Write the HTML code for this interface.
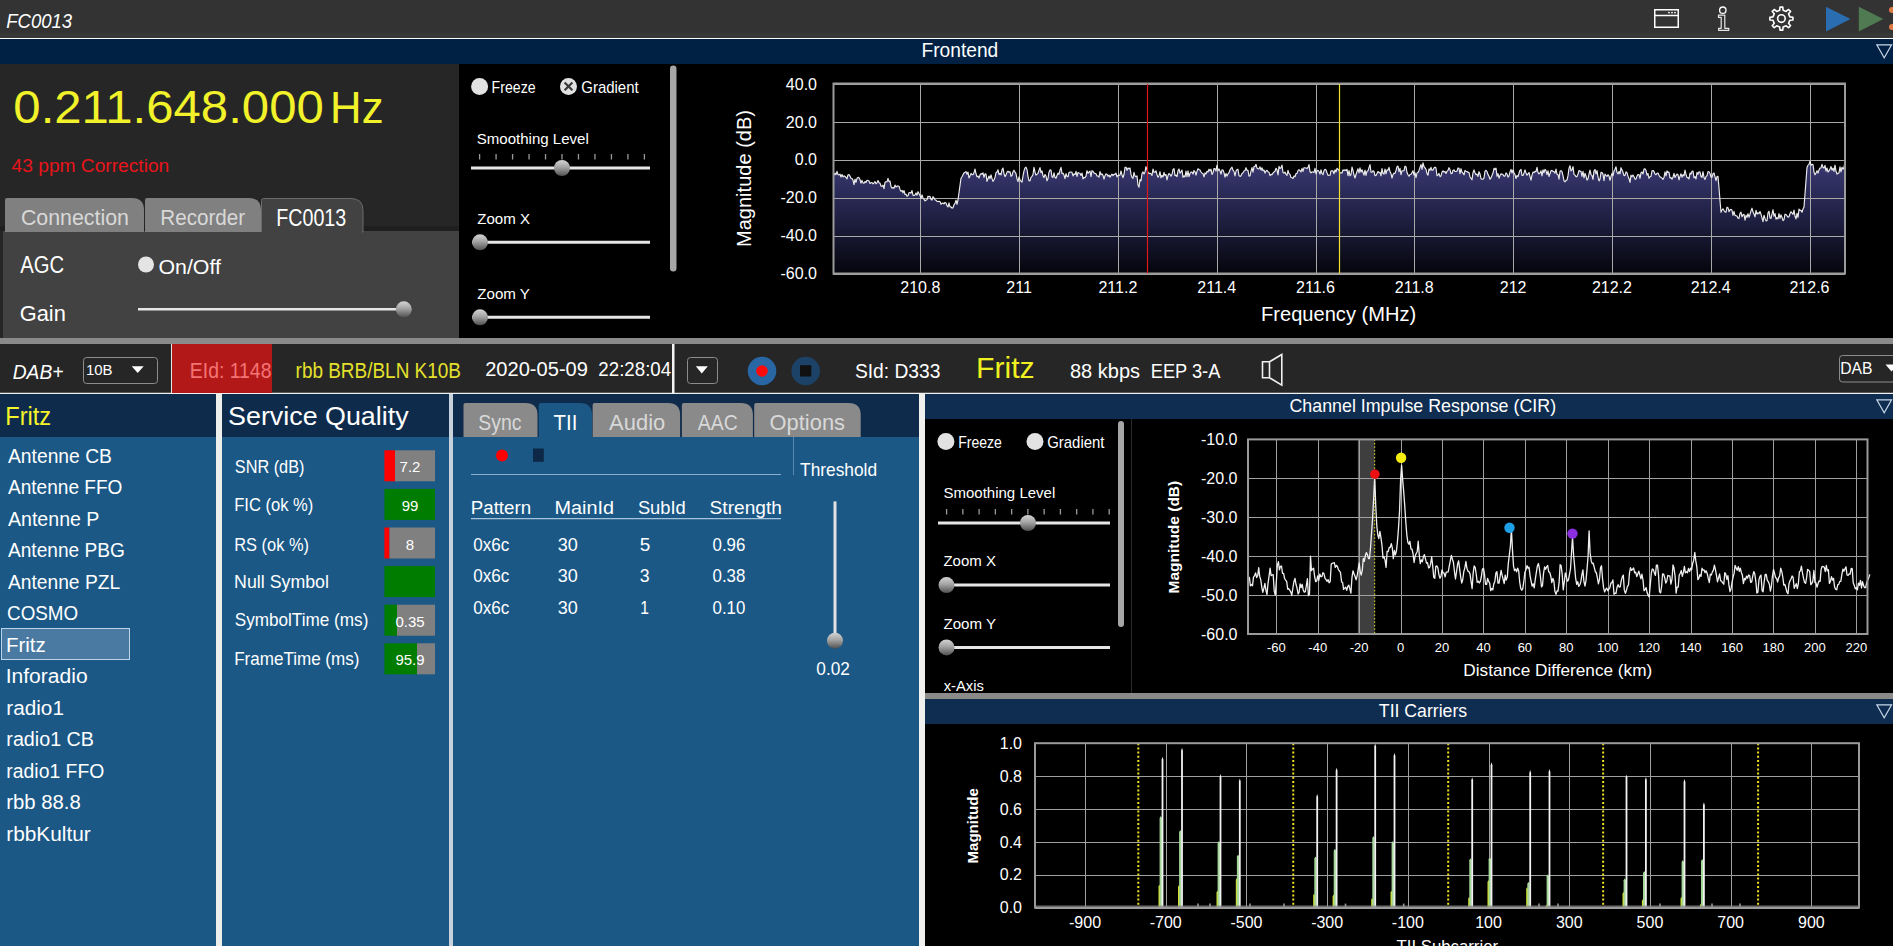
<!DOCTYPE html>
<html><head><meta charset="utf-8"><title>FC0013</title>
<style>
html,body{margin:0;padding:0;background:#000;overflow:hidden;}
svg{display:block;font-family:"Liberation Sans",sans-serif;}
</style></head><body>
<svg width="1893" height="946" viewBox="0 0 1893 946">
<defs>
<linearGradient id="thumb" x1="0" y1="0" x2="0" y2="1">
<stop offset="0" stop-color="#d4d4d4"/><stop offset="0.45" stop-color="#a4a4a4"/><stop offset="1" stop-color="#505050"/>
</linearGradient>
<linearGradient id="specfill" gradientUnits="userSpaceOnUse" x1="0" y1="160" x2="0" y2="274">
<stop offset="0" stop-color="#3a3a74"/><stop offset="0.5" stop-color="#202044"/><stop offset="1" stop-color="#05050c"/>
</linearGradient>
<linearGradient id="greenspike" x1="0" y1="0" x2="0" y2="1">
<stop offset="0" stop-color="#8fd08a"/><stop offset="1" stop-color="#d8f0d0"/>
</linearGradient>
</defs>
<rect x="0" y="0" width="1893" height="38" fill="#333333" />
<rect x="0" y="33" width="1893" height="5" fill="#383838" />
<line x1="0" y1="38.5" x2="1893" y2="38.5" stroke="#ffffff" stroke-width="1" />
<text x="6.24" y="28" font-size="20.3" fill="#ffffff" textLength="65.9" lengthAdjust="spacingAndGlyphs" font-style="italic" >FC0013</text>
<rect x="1654.75" y="9.75" width="23.5" height="17.5" fill="none" stroke="#fff" stroke-width="1.5"/>
<line x1="1655" y1="15.5" x2="1678" y2="15.5" stroke="#fff" stroke-width="1.5" />
<circle cx="1669" cy="12.6" r="0.9" fill="#fff" />
<circle cx="1672" cy="12.6" r="0.9" fill="#fff" />
<circle cx="1675" cy="12.6" r="0.9" fill="#fff" />
<circle cx="1722.8" cy="10.2" r="3.2" fill="none" stroke="#fff" stroke-width="1.3"/>
<path d="M1718.5 15.2 H1724.8 V28.3 H1728.8 V30.3 H1718.6 V28.3 H1721.2 V17.4 H1718.5 Z" fill="none" stroke="#e8e8e8" stroke-width="1.2" stroke-linejoin="round"/>
<path d="M1789.83 16.89 L1792.92 17.21 L1792.92 19.99 L1789.83 20.31 L1788.57 23.35 L1790.53 25.76 L1788.56 27.73 L1786.15 25.77 L1783.11 27.03 L1782.79 30.12 L1780.01 30.12 L1779.69 27.03 L1776.65 25.77 L1774.24 27.73 L1772.27 25.76 L1774.23 23.35 L1772.97 20.31 L1769.88 19.99 L1769.88 17.21 L1772.97 16.89 L1774.23 13.85 L1772.27 11.44 L1774.24 9.47 L1776.65 11.43 L1779.69 10.17 L1780.01 7.08 L1782.79 7.08 L1783.11 10.17 L1786.15 11.43 L1788.56 9.47 L1790.53 11.44 L1788.57 13.85Z" fill="none" stroke="#fff" stroke-width="1.6" stroke-linejoin="round"/>
<circle cx="1781.4" cy="18.6" r="3.8" fill="none" stroke="#fff" stroke-width="1.6"/>
<path d="M1826 6.8 L1850.5 18.9 L1826 31.4 Z" fill="#2a6db0"/>
<path d="M1858.8 6.8 L1883.3 18.9 L1858.8 31.4 Z" fill="#4f7a52"/>
<circle cx="1892" cy="10" r="3" fill="#e07a45" />
<circle cx="1892" cy="27" r="3" fill="#e07a45" />
<rect x="0" y="39" width="1893" height="25" fill="#002143" />
<text x="921.46" y="57" font-size="19.3" fill="#ffffff" textLength="76.83" lengthAdjust="spacingAndGlyphs" >Frontend</text>
<path d="M1876.8 44.8 H1891.6 L1884.2 57.8 Z" fill="none" stroke="#c8d8ea" stroke-width="1.15"/>
<rect x="0" y="64" width="459" height="274" fill="#262626" />
<text x="13.34" y="122.9" font-size="45.3" fill="#f2f22a" textLength="310.43" lengthAdjust="spacingAndGlyphs" >0.211.648.000</text>
<text x="330.11" y="122.9" font-size="45" fill="#f2f22a" textLength="53.37" lengthAdjust="spacingAndGlyphs" >Hz</text>
<text x="11.62" y="172" font-size="19.2" fill="#e8141a" textLength="157.65" lengthAdjust="spacingAndGlyphs" >43 ppm Correction</text>
<rect x="3" y="231" width="456" height="107" fill="#424242" />
<rect x="0" y="226" width="459" height="5" fill="#1f1f1f" />
<path d="M5 232 V200 Q5 198 7 198 H132 Q144 198 144 210 V232 Z" fill="#808080"/>
<path d="M145 232 V200 Q145 198 147 198 H249 Q261 198 261 210 V232 Z" fill="#808080"/>
<path d="M261.5 232 V200.5 Q261.5 198.5 263.5 198.5 H351 Q363 198.5 363 210.5 V232 Z" fill="#424242" stroke="#6a6a6a" stroke-width="1"/>
<rect x="262" y="231" width="100" height="3" fill="#424242" />
<text x="20.93" y="225.3" font-size="22" fill="#d8d8d8" textLength="108.04" lengthAdjust="spacingAndGlyphs" >Connection</text>
<text x="160.35" y="225.4" font-size="22" fill="#d8d8d8" textLength="84.82" lengthAdjust="spacingAndGlyphs" >Recorder</text>
<text x="276.23" y="225.5" font-size="23" fill="#ffffff" textLength="70.02" lengthAdjust="spacingAndGlyphs" >FC0013</text>
<text x="20.3" y="272.9" font-size="23" fill="#ffffff" textLength="43.95" lengthAdjust="spacingAndGlyphs" >AGC</text>
<circle cx="146" cy="264.5" r="8" fill="#e4e4e4" />
<text x="158.44" y="273.7" font-size="21" fill="#ffffff" textLength="62.5" lengthAdjust="spacingAndGlyphs" >On/Off</text>
<text x="19.71" y="320.9" font-size="22.2" fill="#ffffff" textLength="46.16" lengthAdjust="spacingAndGlyphs" >Gain</text>
<line x1="138" y1="309.3" x2="398" y2="309.3" stroke="#e6e6e6" stroke-width="2.5" />
<circle cx="403.8" cy="309.3" r="8" fill="url(#thumb)" />
<rect x="459" y="64" width="221" height="274" fill="#000000" />
<circle cx="479.6" cy="86.4" r="8.5" fill="#e2e2e2" />
<text x="491.57" y="92.8" font-size="15.7" fill="#ffffff" textLength="44.03" lengthAdjust="spacingAndGlyphs" >Freeze</text>
<circle cx="568.5" cy="86.4" r="8.5" fill="#e2e2e2" />
<path d="M564.6 82.5 L572.4 90.3 M572.4 82.5 L564.6 90.3" stroke="#3a3a3a" stroke-width="2.2"/>
<text x="581.25" y="92.8" font-size="15.7" fill="#ffffff" textLength="57.43" lengthAdjust="spacingAndGlyphs" >Gradient</text>
<rect x="670" y="65.5" width="6.5" height="206" rx="3.2" fill="#a6a6a6"/>
<text x="476.72" y="143.7" font-size="15.1" fill="#ffffff" textLength="112.02" lengthAdjust="spacingAndGlyphs" >Smoothing Level</text>
<line x1="479.6" y1="154" x2="479.6" y2="159.5" stroke="#9a9a9a" stroke-width="1.3" />
<line x1="496.08000000000004" y1="154" x2="496.08000000000004" y2="159.5" stroke="#9a9a9a" stroke-width="1.3" />
<line x1="512.5600000000001" y1="154" x2="512.5600000000001" y2="159.5" stroke="#9a9a9a" stroke-width="1.3" />
<line x1="529.04" y1="154" x2="529.04" y2="159.5" stroke="#9a9a9a" stroke-width="1.3" />
<line x1="545.52" y1="154" x2="545.52" y2="159.5" stroke="#9a9a9a" stroke-width="1.3" />
<line x1="562.0" y1="154" x2="562.0" y2="159.5" stroke="#9a9a9a" stroke-width="1.3" />
<line x1="578.48" y1="154" x2="578.48" y2="159.5" stroke="#9a9a9a" stroke-width="1.3" />
<line x1="594.96" y1="154" x2="594.96" y2="159.5" stroke="#9a9a9a" stroke-width="1.3" />
<line x1="611.44" y1="154" x2="611.44" y2="159.5" stroke="#9a9a9a" stroke-width="1.3" />
<line x1="627.9200000000001" y1="154" x2="627.9200000000001" y2="159.5" stroke="#9a9a9a" stroke-width="1.3" />
<line x1="644.4000000000001" y1="154" x2="644.4000000000001" y2="159.5" stroke="#9a9a9a" stroke-width="1.3" />
<line x1="471" y1="168" x2="650" y2="168" stroke="#e6e6e6" stroke-width="3" />
<circle cx="562" cy="168" r="8" fill="url(#thumb)" />
<text x="477.25" y="223.6" font-size="14.9" fill="#ffffff" textLength="52.67" lengthAdjust="spacingAndGlyphs" >Zoom X</text>
<line x1="472" y1="242.3" x2="650" y2="242.3" stroke="#e6e6e6" stroke-width="3" />
<circle cx="480" cy="242.3" r="8" fill="url(#thumb)" />
<text x="477.25" y="299" font-size="14.9" fill="#ffffff" textLength="52.7" lengthAdjust="spacingAndGlyphs" >Zoom Y</text>
<line x1="472" y1="317.3" x2="650" y2="317.3" stroke="#e6e6e6" stroke-width="3" />
<circle cx="480" cy="317.3" r="8" fill="url(#thumb)" />
<rect x="680" y="64" width="1213" height="274" fill="#000000" />
<polygon points="834,273.5 834,175.2 835,173.2 836,174.6 837,171.3 838,174.7 839,174.9 840,174.1 841,177.0 842,174.5 843,176.9 844,175.8 845,176.4 846,177.5 847,178.9 848,174.7 849,174.6 850,176.1 851,178.3 852,178.5 853,180.1 854,184.6 855,179.1 856,182.3 857,178.4 858,177.4 859,177.7 860,179.5 861,183.1 862,180.4 863,182.9 864,183.2 865,181.5 866,182.6 867,180.3 868,180.5 869,181.0 870,183.5 871,182.7 872,182.5 873,183.9 874,182.8 875,181.6 876,183.8 877,182.9 878,180.5 879,182.7 880,183.1 881,186.0 882,186.5 883,185.2 884,188.6 885,182.3 886,181.7 887,181.8 888,178.3 889,181.6 890,181.1 891,186.5 892,188.2 893,187.4 894,188.4 895,185.1 896,187.0 897,186.1 898,186.0 899,186.2 900,189.4 901,191.3 902,190.3 903,192.9 904,190.5 905,194.5 906,194.3 907,196.3 908,195.7 909,192.8 910,192.5 911,193.1 912,190.5 913,195.3 914,195.6 915,195.1 916,192.9 917,195.2 918,191.7 919,193.6 920,195.4 921,198.5 922,194.9 923,198.0 924,199.3 925,200.9 926,200.0 927,199.7 928,196.2 929,196.8 930,196.4 931,199.2 932,200.1 933,196.7 934,198.1 935,199.7 936,200.3 937,201.2 938,201.7 939,201.2 940,201.5 941,204.3 942,203.4 943,203.0 944,203.9 945,202.4 946,203.0 947,205.7 948,207.0 949,202.9 950,206.9 951,206.9 952,208.2 953,207.8 954,204.8 955,203.4 956,200.2 957,204.4 958,200.0 959,192.6 960,185.4 961,178.2 962,176.7 963,174.7 964,172.9 965,172.3 966,171.6 967,174.2 968,172.1 969,177.9 970,175.9 971,173.4 972,174.7 973,174.6 974,172.8 975,169.0 976,173.8 977,176.8 978,176.1 979,178.1 980,174.8 981,173.6 982,174.2 983,172.8 984,177.3 985,173.9 986,174.1 987,181.4 988,178.7 989,176.0 990,178.7 991,174.9 992,178.6 993,181.4 994,179.7 995,177.4 996,172.8 997,172.0 998,169.8 999,174.6 1000,173.4 1001,174.9 1002,169.9 1003,168.1 1004,173.7 1005,176.6 1006,174.9 1007,172.2 1008,171.2 1009,172.3 1010,171.7 1011,176.3 1012,175.5 1013,171.7 1014,170.2 1015,172.1 1016,173.6 1017,178.9 1018,181.6 1019,176.9 1020,179.8 1021,181.3 1022,182.1 1023,175.9 1024,170.9 1025,167.9 1026,167.2 1027,169.6 1028,176.3 1029,180.8 1030,180.9 1031,177.3 1032,176.3 1033,174.5 1034,167.4 1035,172.1 1036,175.1 1037,174.3 1038,173.3 1039,170.4 1040,167.6 1041,172.6 1042,170.9 1043,175.8 1044,177.7 1045,174.5 1046,176.0 1047,180.8 1048,178.5 1049,172.2 1050,169.9 1051,170.0 1052,177.0 1053,177.4 1054,172.9 1055,177.6 1056,178.2 1057,175.5 1058,173.1 1059,174.3 1060,170.1 1061,167.4 1062,173.7 1063,173.2 1064,175.1 1065,178.7 1066,173.6 1067,176.4 1068,176.8 1069,172.5 1070,172.0 1071,172.0 1072,172.4 1073,175.9 1074,173.9 1075,174.5 1076,171.3 1077,176.5 1078,172.5 1079,173.0 1080,173.2 1081,175.5 1082,173.1 1083,178.8 1084,177.4 1085,177.7 1086,176.1 1087,170.7 1088,173.3 1089,172.0 1090,171.2 1091,176.6 1092,170.7 1093,171.3 1094,172.9 1095,173.4 1096,173.7 1097,175.9 1098,176.0 1099,177.2 1100,171.5 1101,174.8 1102,173.8 1103,175.4 1104,179.2 1105,175.7 1106,173.9 1107,174.2 1108,176.3 1109,175.0 1110,177.2 1111,175.4 1112,174.1 1113,175.6 1114,174.3 1115,174.3 1116,173.1 1117,176.9 1118,175.3 1119,175.4 1120,174.9 1121,171.0 1122,175.0 1123,177.6 1124,174.5 1125,167.4 1126,167.2 1127,170.4 1128,168.0 1129,168.9 1130,168.0 1131,174.4 1132,177.3 1133,178.5 1134,172.3 1135,176.1 1136,176.7 1137,175.9 1138,185.1 1139,187.2 1140,179.5 1141,180.9 1142,173.5 1143,171.9 1144,174.0 1145,171.9 1146,166.7 1147,169.6 1148,172.5 1149,173.5 1150,173.4 1151,173.8 1152,175.5 1153,169.0 1154,172.3 1155,172.2 1156,170.8 1157,174.7 1158,177.2 1159,175.7 1160,171.7 1161,177.8 1162,175.4 1163,176.9 1164,172.4 1165,175.5 1166,174.5 1167,179.8 1168,175.6 1169,173.6 1170,174.2 1171,176.2 1172,174.3 1173,169.5 1174,168.7 1175,175.7 1176,175.1 1177,176.6 1178,170.8 1179,168.9 1180,173.1 1181,171.8 1182,170.0 1183,177.3 1184,175.8 1185,177.0 1186,171.1 1187,176.6 1188,170.9 1189,176.7 1190,173.5 1191,172.0 1192,172.1 1193,174.1 1194,170.5 1195,171.7 1196,175.2 1197,171.4 1198,168.8 1199,169.5 1200,170.0 1201,172.0 1202,173.2 1203,173.5 1204,176.8 1205,172.8 1206,174.0 1207,171.3 1208,172.0 1209,169.2 1210,170.9 1211,169.2 1212,174.5 1213,172.8 1214,168.5 1215,168.6 1216,171.1 1217,165.0 1218,170.7 1219,169.0 1220,171.1 1221,174.1 1222,169.9 1223,170.0 1224,172.6 1225,177.2 1226,173.5 1227,176.1 1228,173.9 1229,172.7 1230,169.8 1231,168.4 1232,167.1 1233,170.2 1234,171.5 1235,176.0 1236,171.0 1237,169.6 1238,169.3 1239,175.6 1240,176.4 1241,175.8 1242,173.6 1243,172.7 1244,171.1 1245,170.6 1246,167.7 1247,170.4 1248,170.3 1249,176.1 1250,175.8 1251,171.2 1252,167.6 1253,172.1 1254,166.6 1255,166.5 1256,164.3 1257,168.1 1258,168.9 1259,168.7 1260,166.8 1261,170.2 1262,167.8 1263,170.7 1264,170.0 1265,173.1 1266,171.0 1267,170.3 1268,171.8 1269,172.2 1270,175.6 1271,174.4 1272,174.6 1273,173.1 1274,171.9 1275,171.3 1276,168.3 1277,169.9 1278,174.9 1279,166.4 1280,168.4 1281,167.8 1282,165.1 1283,172.4 1284,173.2 1285,172.1 1286,174.3 1287,175.4 1288,170.3 1289,173.6 1290,174.4 1291,177.5 1292,177.8 1293,178.4 1294,176.1 1295,176.7 1296,173.6 1297,173.4 1298,170.6 1299,169.6 1300,170.6 1301,172.0 1302,168.4 1303,171.4 1304,167.7 1305,167.8 1306,168.0 1307,168.6 1308,167.4 1309,164.6 1310,171.7 1311,172.9 1312,171.9 1313,172.0 1314,172.5 1315,168.3 1316,173.9 1317,171.1 1318,170.3 1319,171.5 1320,174.1 1321,169.8 1322,173.5 1323,174.7 1324,170.6 1325,169.3 1326,169.9 1327,172.8 1328,175.4 1329,175.2 1330,175.3 1331,170.8 1332,170.9 1333,171.0 1334,173.7 1335,169.8 1336,172.0 1337,168.4 1338,169.1 1339,170.5 1340,173.0 1341,172.9 1342,173.0 1343,169.9 1344,170.5 1345,169.8 1346,170.6 1347,169.3 1348,175.6 1349,170.5 1350,175.8 1351,174.7 1352,167.0 1353,170.5 1354,175.0 1355,178.0 1356,174.5 1357,171.5 1358,168.8 1359,172.8 1360,167.8 1361,172.1 1362,169.8 1363,172.3 1364,175.1 1365,170.0 1366,175.4 1367,171.2 1368,170.9 1369,167.7 1370,164.6 1371,172.1 1372,172.2 1373,170.7 1374,171.5 1375,175.7 1376,175.4 1377,173.4 1378,171.4 1379,172.7 1380,172.4 1381,175.8 1382,168.6 1383,173.3 1384,174.1 1385,169.0 1386,173.8 1387,169.9 1388,170.2 1389,167.4 1390,171.4 1391,173.7 1392,178.0 1393,174.6 1394,173.2 1395,173.4 1396,170.5 1397,166.7 1398,166.1 1399,171.6 1400,168.3 1401,174.6 1402,170.9 1403,170.8 1404,170.6 1405,166.2 1406,166.8 1407,172.5 1408,174.8 1409,176.3 1410,174.5 1411,174.2 1412,172.6 1413,170.7 1414,175.1 1415,172.7 1416,177.6 1417,173.0 1418,172.5 1419,170.4 1420,167.4 1421,164.5 1422,169.3 1423,162.8 1424,166.6 1425,167.9 1426,169.4 1427,173.6 1428,175.2 1429,168.9 1430,170.3 1431,167.4 1432,170.3 1433,170.1 1434,168.0 1435,167.1 1436,168.0 1437,175.7 1438,175.1 1439,173.4 1440,176.7 1441,175.9 1442,172.1 1443,170.9 1444,172.0 1445,171.4 1446,173.5 1447,171.3 1448,170.3 1449,167.7 1450,169.6 1451,173.7 1452,173.5 1453,170.2 1454,169.9 1455,171.5 1456,171.4 1457,171.2 1458,168.0 1459,168.3 1460,173.6 1461,168.7 1462,172.2 1463,173.1 1464,174.8 1465,170.4 1466,171.4 1467,171.5 1468,172.4 1469,172.4 1470,177.0 1471,178.3 1472,179.8 1473,172.5 1474,169.9 1475,172.8 1476,174.7 1477,174.1 1478,176.5 1479,171.7 1480,173.9 1481,178.7 1482,179.3 1483,179.1 1484,178.0 1485,171.1 1486,170.3 1487,171.5 1488,174.6 1489,176.3 1490,179.2 1491,177.9 1492,175.5 1493,173.0 1494,168.4 1495,169.5 1496,168.1 1497,176.3 1498,173.6 1499,178.2 1500,175.5 1501,173.9 1502,174.1 1503,174.7 1504,176.1 1505,176.1 1506,172.9 1507,173.9 1508,177.2 1509,175.9 1510,171.9 1511,169.4 1512,173.0 1513,169.8 1514,172.8 1515,174.7 1516,178.5 1517,175.5 1518,176.7 1519,173.3 1520,170.3 1521,169.3 1522,175.5 1523,175.5 1524,173.1 1525,169.9 1526,172.9 1527,175.2 1528,173.8 1529,172.5 1530,176.6 1531,180.1 1532,175.1 1533,172.1 1534,172.6 1535,171.4 1536,171.6 1537,167.3 1538,172.7 1539,173.8 1540,173.0 1541,170.8 1542,175.8 1543,169.8 1544,172.7 1545,169.3 1546,170.6 1547,174.6 1548,170.9 1549,176.5 1550,173.6 1551,170.8 1552,170.4 1553,171.2 1554,171.8 1555,173.2 1556,169.1 1557,174.3 1558,174.6 1559,179.2 1560,171.5 1561,170.6 1562,171.6 1563,175.6 1564,180.9 1565,181.8 1566,180.4 1567,180.0 1568,175.7 1569,168.1 1570,165.7 1571,170.9 1572,169.9 1573,166.6 1574,174.4 1575,175.1 1576,176.6 1577,176.6 1578,174.0 1579,170.5 1580,171.1 1581,171.4 1582,176.5 1583,171.3 1584,178.0 1585,173.3 1586,175.9 1587,180.1 1588,178.9 1589,174.0 1590,170.1 1591,174.5 1592,175.7 1593,179.4 1594,170.9 1595,169.5 1596,173.9 1597,170.6 1598,176.8 1599,180.9 1600,179.1 1601,172.3 1602,172.6 1603,174.1 1604,180.7 1605,174.0 1606,175.3 1607,176.4 1608,174.7 1609,176.0 1610,180.4 1611,176.5 1612,173.3 1613,175.8 1614,171.1 1615,169.3 1616,166.8 1617,172.5 1618,173.9 1619,171.6 1620,173.8 1621,167.7 1622,170.1 1623,172.3 1624,175.7 1625,175.4 1626,171.9 1627,172.7 1628,176.2 1629,178.7 1630,182.4 1631,175.2 1632,176.8 1633,174.9 1634,176.8 1635,179.1 1636,179.1 1637,176.1 1638,174.5 1639,174.6 1640,178.3 1641,172.8 1642,172.0 1643,173.9 1644,169.1 1645,168.8 1646,170.3 1647,175.1 1648,173.6 1649,178.3 1650,176.8 1651,176.3 1652,170.7 1653,170.5 1654,171.5 1655,174.0 1656,174.7 1657,173.3 1658,173.0 1659,175.3 1660,176.9 1661,177.3 1662,178.1 1663,179.3 1664,177.4 1665,171.9 1666,175.8 1667,170.9 1668,172.5 1669,172.1 1670,177.9 1671,177.6 1672,179.2 1673,177.0 1674,173.3 1675,177.6 1676,175.6 1677,174.0 1678,174.8 1679,179.9 1680,176.4 1681,173.8 1682,177.2 1683,174.6 1684,175.8 1685,170.0 1686,174.5 1687,177.6 1688,177.6 1689,178.8 1690,173.0 1691,174.1 1692,171.2 1693,171.0 1694,177.8 1695,176.6 1696,178.9 1697,172.4 1698,174.3 1699,171.8 1700,172.1 1701,176.5 1702,177.4 1703,171.7 1704,177.4 1705,179.5 1706,176.6 1707,175.6 1708,171.6 1709,171.7 1710,173.5 1711,177.0 1712,177.3 1713,173.7 1714,173.0 1715,176.9 1716,180.7 1717,176.6 1718,176.4 1719,188.0 1720,200.6 1721,212.3 1722,210.0 1723,208.8 1724,210.5 1725,211.9 1726,212.1 1727,207.2 1728,207.7 1729,211.7 1730,209.7 1731,209.4 1732,210.3 1733,215.3 1734,211.4 1735,215.4 1736,215.7 1737,216.1 1738,218.3 1739,218.4 1740,213.4 1741,212.1 1742,216.8 1743,214.7 1744,214.3 1745,220.2 1746,215.3 1747,217.3 1748,213.7 1749,217.2 1750,214.2 1751,210.9 1752,208.2 1753,212.1 1754,214.1 1755,216.9 1756,210.4 1757,214.2 1758,212.7 1759,213.7 1760,211.5 1761,214.3 1762,217.9 1763,221.6 1764,215.3 1765,218.4 1766,220.9 1767,220.8 1768,212.7 1769,211.2 1770,217.9 1771,218.4 1772,213.8 1773,209.7 1774,216.3 1775,213.6 1776,219.1 1777,217.7 1778,218.8 1779,213.7 1780,218.4 1781,214.9 1782,217.3 1783,220.7 1784,219.6 1785,214.2 1786,214.5 1787,215.9 1788,217.2 1789,216.7 1790,213.7 1791,211.7 1792,213.0 1793,214.3 1794,210.1 1795,216.3 1796,218.9 1797,213.3 1798,217.4 1799,209.1 1800,210.4 1801,210.4 1802,212.2 1803,209.1 1804,207.1 1805,193.9 1806,180.5 1807,167.5 1808,165.1 1809,164.4 1810,161.2 1811,165.3 1812,164.3 1813,164.5 1814,172.1 1815,174.8 1816,173.1 1817,170.8 1818,173.1 1819,169.9 1820,168.1 1821,167.9 1822,164.4 1823,167.2 1824,168.1 1825,165.4 1826,171.1 1827,168.0 1828,172.0 1829,170.9 1830,168.9 1831,166.6 1832,170.2 1833,168.2 1834,171.4 1835,165.2 1836,171.3 1837,174.1 1838,173.2 1839,172.9 1840,166.8 1841,171.8 1842,167.3 1843,169.1 1844,167.4 1845,161.3 1845,273.5" fill="url(#specfill)"/>
<line x1="833" y1="84.5" x2="1845" y2="84.5" stroke="#a8a8a8" stroke-width="1" />
<line x1="833" y1="122.5" x2="1845" y2="122.5" stroke="#a8a8a8" stroke-width="1" />
<line x1="833" y1="160.5" x2="1845" y2="160.5" stroke="#a8a8a8" stroke-width="1" />
<line x1="833" y1="198.5" x2="1845" y2="198.5" stroke="#a8a8a8" stroke-width="1" />
<line x1="833" y1="236.5" x2="1845" y2="236.5" stroke="#a8a8a8" stroke-width="1" />
<line x1="833" y1="274.5" x2="1845" y2="274.5" stroke="#a8a8a8" stroke-width="1" />
<line x1="920.5" y1="84" x2="920.5" y2="273.5" stroke="#a8a8a8" stroke-width="1" />
<line x1="1019.5" y1="84" x2="1019.5" y2="273.5" stroke="#a8a8a8" stroke-width="1" />
<line x1="1118.5" y1="84" x2="1118.5" y2="273.5" stroke="#a8a8a8" stroke-width="1" />
<line x1="1217.5" y1="84" x2="1217.5" y2="273.5" stroke="#a8a8a8" stroke-width="1" />
<line x1="1316.5" y1="84" x2="1316.5" y2="273.5" stroke="#a8a8a8" stroke-width="1" />
<line x1="1414.5" y1="84" x2="1414.5" y2="273.5" stroke="#a8a8a8" stroke-width="1" />
<line x1="1513.5" y1="84" x2="1513.5" y2="273.5" stroke="#a8a8a8" stroke-width="1" />
<line x1="1612.5" y1="84" x2="1612.5" y2="273.5" stroke="#a8a8a8" stroke-width="1" />
<line x1="1711.5" y1="84" x2="1711.5" y2="273.5" stroke="#a8a8a8" stroke-width="1" />
<line x1="1810.5" y1="84" x2="1810.5" y2="273.5" stroke="#a8a8a8" stroke-width="1" />
<polyline points="834,175.2 835,173.2 836,174.6 837,171.3 838,174.7 839,174.9 840,174.1 841,177.0 842,174.5 843,176.9 844,175.8 845,176.4 846,177.5 847,178.9 848,174.7 849,174.6 850,176.1 851,178.3 852,178.5 853,180.1 854,184.6 855,179.1 856,182.3 857,178.4 858,177.4 859,177.7 860,179.5 861,183.1 862,180.4 863,182.9 864,183.2 865,181.5 866,182.6 867,180.3 868,180.5 869,181.0 870,183.5 871,182.7 872,182.5 873,183.9 874,182.8 875,181.6 876,183.8 877,182.9 878,180.5 879,182.7 880,183.1 881,186.0 882,186.5 883,185.2 884,188.6 885,182.3 886,181.7 887,181.8 888,178.3 889,181.6 890,181.1 891,186.5 892,188.2 893,187.4 894,188.4 895,185.1 896,187.0 897,186.1 898,186.0 899,186.2 900,189.4 901,191.3 902,190.3 903,192.9 904,190.5 905,194.5 906,194.3 907,196.3 908,195.7 909,192.8 910,192.5 911,193.1 912,190.5 913,195.3 914,195.6 915,195.1 916,192.9 917,195.2 918,191.7 919,193.6 920,195.4 921,198.5 922,194.9 923,198.0 924,199.3 925,200.9 926,200.0 927,199.7 928,196.2 929,196.8 930,196.4 931,199.2 932,200.1 933,196.7 934,198.1 935,199.7 936,200.3 937,201.2 938,201.7 939,201.2 940,201.5 941,204.3 942,203.4 943,203.0 944,203.9 945,202.4 946,203.0 947,205.7 948,207.0 949,202.9 950,206.9 951,206.9 952,208.2 953,207.8 954,204.8 955,203.4 956,200.2 957,204.4 958,200.0 959,192.6 960,185.4 961,178.2 962,176.7 963,174.7 964,172.9 965,172.3 966,171.6 967,174.2 968,172.1 969,177.9 970,175.9 971,173.4 972,174.7 973,174.6 974,172.8 975,169.0 976,173.8 977,176.8 978,176.1 979,178.1 980,174.8 981,173.6 982,174.2 983,172.8 984,177.3 985,173.9 986,174.1 987,181.4 988,178.7 989,176.0 990,178.7 991,174.9 992,178.6 993,181.4 994,179.7 995,177.4 996,172.8 997,172.0 998,169.8 999,174.6 1000,173.4 1001,174.9 1002,169.9 1003,168.1 1004,173.7 1005,176.6 1006,174.9 1007,172.2 1008,171.2 1009,172.3 1010,171.7 1011,176.3 1012,175.5 1013,171.7 1014,170.2 1015,172.1 1016,173.6 1017,178.9 1018,181.6 1019,176.9 1020,179.8 1021,181.3 1022,182.1 1023,175.9 1024,170.9 1025,167.9 1026,167.2 1027,169.6 1028,176.3 1029,180.8 1030,180.9 1031,177.3 1032,176.3 1033,174.5 1034,167.4 1035,172.1 1036,175.1 1037,174.3 1038,173.3 1039,170.4 1040,167.6 1041,172.6 1042,170.9 1043,175.8 1044,177.7 1045,174.5 1046,176.0 1047,180.8 1048,178.5 1049,172.2 1050,169.9 1051,170.0 1052,177.0 1053,177.4 1054,172.9 1055,177.6 1056,178.2 1057,175.5 1058,173.1 1059,174.3 1060,170.1 1061,167.4 1062,173.7 1063,173.2 1064,175.1 1065,178.7 1066,173.6 1067,176.4 1068,176.8 1069,172.5 1070,172.0 1071,172.0 1072,172.4 1073,175.9 1074,173.9 1075,174.5 1076,171.3 1077,176.5 1078,172.5 1079,173.0 1080,173.2 1081,175.5 1082,173.1 1083,178.8 1084,177.4 1085,177.7 1086,176.1 1087,170.7 1088,173.3 1089,172.0 1090,171.2 1091,176.6 1092,170.7 1093,171.3 1094,172.9 1095,173.4 1096,173.7 1097,175.9 1098,176.0 1099,177.2 1100,171.5 1101,174.8 1102,173.8 1103,175.4 1104,179.2 1105,175.7 1106,173.9 1107,174.2 1108,176.3 1109,175.0 1110,177.2 1111,175.4 1112,174.1 1113,175.6 1114,174.3 1115,174.3 1116,173.1 1117,176.9 1118,175.3 1119,175.4 1120,174.9 1121,171.0 1122,175.0 1123,177.6 1124,174.5 1125,167.4 1126,167.2 1127,170.4 1128,168.0 1129,168.9 1130,168.0 1131,174.4 1132,177.3 1133,178.5 1134,172.3 1135,176.1 1136,176.7 1137,175.9 1138,185.1 1139,187.2 1140,179.5 1141,180.9 1142,173.5 1143,171.9 1144,174.0 1145,171.9 1146,166.7 1147,169.6 1148,172.5 1149,173.5 1150,173.4 1151,173.8 1152,175.5 1153,169.0 1154,172.3 1155,172.2 1156,170.8 1157,174.7 1158,177.2 1159,175.7 1160,171.7 1161,177.8 1162,175.4 1163,176.9 1164,172.4 1165,175.5 1166,174.5 1167,179.8 1168,175.6 1169,173.6 1170,174.2 1171,176.2 1172,174.3 1173,169.5 1174,168.7 1175,175.7 1176,175.1 1177,176.6 1178,170.8 1179,168.9 1180,173.1 1181,171.8 1182,170.0 1183,177.3 1184,175.8 1185,177.0 1186,171.1 1187,176.6 1188,170.9 1189,176.7 1190,173.5 1191,172.0 1192,172.1 1193,174.1 1194,170.5 1195,171.7 1196,175.2 1197,171.4 1198,168.8 1199,169.5 1200,170.0 1201,172.0 1202,173.2 1203,173.5 1204,176.8 1205,172.8 1206,174.0 1207,171.3 1208,172.0 1209,169.2 1210,170.9 1211,169.2 1212,174.5 1213,172.8 1214,168.5 1215,168.6 1216,171.1 1217,165.0 1218,170.7 1219,169.0 1220,171.1 1221,174.1 1222,169.9 1223,170.0 1224,172.6 1225,177.2 1226,173.5 1227,176.1 1228,173.9 1229,172.7 1230,169.8 1231,168.4 1232,167.1 1233,170.2 1234,171.5 1235,176.0 1236,171.0 1237,169.6 1238,169.3 1239,175.6 1240,176.4 1241,175.8 1242,173.6 1243,172.7 1244,171.1 1245,170.6 1246,167.7 1247,170.4 1248,170.3 1249,176.1 1250,175.8 1251,171.2 1252,167.6 1253,172.1 1254,166.6 1255,166.5 1256,164.3 1257,168.1 1258,168.9 1259,168.7 1260,166.8 1261,170.2 1262,167.8 1263,170.7 1264,170.0 1265,173.1 1266,171.0 1267,170.3 1268,171.8 1269,172.2 1270,175.6 1271,174.4 1272,174.6 1273,173.1 1274,171.9 1275,171.3 1276,168.3 1277,169.9 1278,174.9 1279,166.4 1280,168.4 1281,167.8 1282,165.1 1283,172.4 1284,173.2 1285,172.1 1286,174.3 1287,175.4 1288,170.3 1289,173.6 1290,174.4 1291,177.5 1292,177.8 1293,178.4 1294,176.1 1295,176.7 1296,173.6 1297,173.4 1298,170.6 1299,169.6 1300,170.6 1301,172.0 1302,168.4 1303,171.4 1304,167.7 1305,167.8 1306,168.0 1307,168.6 1308,167.4 1309,164.6 1310,171.7 1311,172.9 1312,171.9 1313,172.0 1314,172.5 1315,168.3 1316,173.9 1317,171.1 1318,170.3 1319,171.5 1320,174.1 1321,169.8 1322,173.5 1323,174.7 1324,170.6 1325,169.3 1326,169.9 1327,172.8 1328,175.4 1329,175.2 1330,175.3 1331,170.8 1332,170.9 1333,171.0 1334,173.7 1335,169.8 1336,172.0 1337,168.4 1338,169.1 1339,170.5 1340,173.0 1341,172.9 1342,173.0 1343,169.9 1344,170.5 1345,169.8 1346,170.6 1347,169.3 1348,175.6 1349,170.5 1350,175.8 1351,174.7 1352,167.0 1353,170.5 1354,175.0 1355,178.0 1356,174.5 1357,171.5 1358,168.8 1359,172.8 1360,167.8 1361,172.1 1362,169.8 1363,172.3 1364,175.1 1365,170.0 1366,175.4 1367,171.2 1368,170.9 1369,167.7 1370,164.6 1371,172.1 1372,172.2 1373,170.7 1374,171.5 1375,175.7 1376,175.4 1377,173.4 1378,171.4 1379,172.7 1380,172.4 1381,175.8 1382,168.6 1383,173.3 1384,174.1 1385,169.0 1386,173.8 1387,169.9 1388,170.2 1389,167.4 1390,171.4 1391,173.7 1392,178.0 1393,174.6 1394,173.2 1395,173.4 1396,170.5 1397,166.7 1398,166.1 1399,171.6 1400,168.3 1401,174.6 1402,170.9 1403,170.8 1404,170.6 1405,166.2 1406,166.8 1407,172.5 1408,174.8 1409,176.3 1410,174.5 1411,174.2 1412,172.6 1413,170.7 1414,175.1 1415,172.7 1416,177.6 1417,173.0 1418,172.5 1419,170.4 1420,167.4 1421,164.5 1422,169.3 1423,162.8 1424,166.6 1425,167.9 1426,169.4 1427,173.6 1428,175.2 1429,168.9 1430,170.3 1431,167.4 1432,170.3 1433,170.1 1434,168.0 1435,167.1 1436,168.0 1437,175.7 1438,175.1 1439,173.4 1440,176.7 1441,175.9 1442,172.1 1443,170.9 1444,172.0 1445,171.4 1446,173.5 1447,171.3 1448,170.3 1449,167.7 1450,169.6 1451,173.7 1452,173.5 1453,170.2 1454,169.9 1455,171.5 1456,171.4 1457,171.2 1458,168.0 1459,168.3 1460,173.6 1461,168.7 1462,172.2 1463,173.1 1464,174.8 1465,170.4 1466,171.4 1467,171.5 1468,172.4 1469,172.4 1470,177.0 1471,178.3 1472,179.8 1473,172.5 1474,169.9 1475,172.8 1476,174.7 1477,174.1 1478,176.5 1479,171.7 1480,173.9 1481,178.7 1482,179.3 1483,179.1 1484,178.0 1485,171.1 1486,170.3 1487,171.5 1488,174.6 1489,176.3 1490,179.2 1491,177.9 1492,175.5 1493,173.0 1494,168.4 1495,169.5 1496,168.1 1497,176.3 1498,173.6 1499,178.2 1500,175.5 1501,173.9 1502,174.1 1503,174.7 1504,176.1 1505,176.1 1506,172.9 1507,173.9 1508,177.2 1509,175.9 1510,171.9 1511,169.4 1512,173.0 1513,169.8 1514,172.8 1515,174.7 1516,178.5 1517,175.5 1518,176.7 1519,173.3 1520,170.3 1521,169.3 1522,175.5 1523,175.5 1524,173.1 1525,169.9 1526,172.9 1527,175.2 1528,173.8 1529,172.5 1530,176.6 1531,180.1 1532,175.1 1533,172.1 1534,172.6 1535,171.4 1536,171.6 1537,167.3 1538,172.7 1539,173.8 1540,173.0 1541,170.8 1542,175.8 1543,169.8 1544,172.7 1545,169.3 1546,170.6 1547,174.6 1548,170.9 1549,176.5 1550,173.6 1551,170.8 1552,170.4 1553,171.2 1554,171.8 1555,173.2 1556,169.1 1557,174.3 1558,174.6 1559,179.2 1560,171.5 1561,170.6 1562,171.6 1563,175.6 1564,180.9 1565,181.8 1566,180.4 1567,180.0 1568,175.7 1569,168.1 1570,165.7 1571,170.9 1572,169.9 1573,166.6 1574,174.4 1575,175.1 1576,176.6 1577,176.6 1578,174.0 1579,170.5 1580,171.1 1581,171.4 1582,176.5 1583,171.3 1584,178.0 1585,173.3 1586,175.9 1587,180.1 1588,178.9 1589,174.0 1590,170.1 1591,174.5 1592,175.7 1593,179.4 1594,170.9 1595,169.5 1596,173.9 1597,170.6 1598,176.8 1599,180.9 1600,179.1 1601,172.3 1602,172.6 1603,174.1 1604,180.7 1605,174.0 1606,175.3 1607,176.4 1608,174.7 1609,176.0 1610,180.4 1611,176.5 1612,173.3 1613,175.8 1614,171.1 1615,169.3 1616,166.8 1617,172.5 1618,173.9 1619,171.6 1620,173.8 1621,167.7 1622,170.1 1623,172.3 1624,175.7 1625,175.4 1626,171.9 1627,172.7 1628,176.2 1629,178.7 1630,182.4 1631,175.2 1632,176.8 1633,174.9 1634,176.8 1635,179.1 1636,179.1 1637,176.1 1638,174.5 1639,174.6 1640,178.3 1641,172.8 1642,172.0 1643,173.9 1644,169.1 1645,168.8 1646,170.3 1647,175.1 1648,173.6 1649,178.3 1650,176.8 1651,176.3 1652,170.7 1653,170.5 1654,171.5 1655,174.0 1656,174.7 1657,173.3 1658,173.0 1659,175.3 1660,176.9 1661,177.3 1662,178.1 1663,179.3 1664,177.4 1665,171.9 1666,175.8 1667,170.9 1668,172.5 1669,172.1 1670,177.9 1671,177.6 1672,179.2 1673,177.0 1674,173.3 1675,177.6 1676,175.6 1677,174.0 1678,174.8 1679,179.9 1680,176.4 1681,173.8 1682,177.2 1683,174.6 1684,175.8 1685,170.0 1686,174.5 1687,177.6 1688,177.6 1689,178.8 1690,173.0 1691,174.1 1692,171.2 1693,171.0 1694,177.8 1695,176.6 1696,178.9 1697,172.4 1698,174.3 1699,171.8 1700,172.1 1701,176.5 1702,177.4 1703,171.7 1704,177.4 1705,179.5 1706,176.6 1707,175.6 1708,171.6 1709,171.7 1710,173.5 1711,177.0 1712,177.3 1713,173.7 1714,173.0 1715,176.9 1716,180.7 1717,176.6 1718,176.4 1719,188.0 1720,200.6 1721,212.3 1722,210.0 1723,208.8 1724,210.5 1725,211.9 1726,212.1 1727,207.2 1728,207.7 1729,211.7 1730,209.7 1731,209.4 1732,210.3 1733,215.3 1734,211.4 1735,215.4 1736,215.7 1737,216.1 1738,218.3 1739,218.4 1740,213.4 1741,212.1 1742,216.8 1743,214.7 1744,214.3 1745,220.2 1746,215.3 1747,217.3 1748,213.7 1749,217.2 1750,214.2 1751,210.9 1752,208.2 1753,212.1 1754,214.1 1755,216.9 1756,210.4 1757,214.2 1758,212.7 1759,213.7 1760,211.5 1761,214.3 1762,217.9 1763,221.6 1764,215.3 1765,218.4 1766,220.9 1767,220.8 1768,212.7 1769,211.2 1770,217.9 1771,218.4 1772,213.8 1773,209.7 1774,216.3 1775,213.6 1776,219.1 1777,217.7 1778,218.8 1779,213.7 1780,218.4 1781,214.9 1782,217.3 1783,220.7 1784,219.6 1785,214.2 1786,214.5 1787,215.9 1788,217.2 1789,216.7 1790,213.7 1791,211.7 1792,213.0 1793,214.3 1794,210.1 1795,216.3 1796,218.9 1797,213.3 1798,217.4 1799,209.1 1800,210.4 1801,210.4 1802,212.2 1803,209.1 1804,207.1 1805,193.9 1806,180.5 1807,167.5 1808,165.1 1809,164.4 1810,161.2 1811,165.3 1812,164.3 1813,164.5 1814,172.1 1815,174.8 1816,173.1 1817,170.8 1818,173.1 1819,169.9 1820,168.1 1821,167.9 1822,164.4 1823,167.2 1824,168.1 1825,165.4 1826,171.1 1827,168.0 1828,172.0 1829,170.9 1830,168.9 1831,166.6 1832,170.2 1833,168.2 1834,171.4 1835,165.2 1836,171.3 1837,174.1 1838,173.2 1839,172.9 1840,166.8 1841,171.8 1842,167.3 1843,169.1 1844,167.4 1845,161.3" fill="none" stroke="#ececec" stroke-width="1.15" stroke-linejoin="round"/>
<rect x="833.5" y="83.5" width="1011.5" height="190" fill="none" stroke="#9a9a9a" stroke-width="2"/>
<line x1="1147.5" y1="84" x2="1147.5" y2="273.5" stroke="#e01818" stroke-width="1.2" />
<line x1="1339.5" y1="84" x2="1339.5" y2="273.5" stroke="#f0e030" stroke-width="1.2" />
<text x="817" y="89.6" font-size="16" fill="#ffffff" text-anchor="end" >40.0</text>
<text x="817" y="127.5" font-size="16" fill="#ffffff" text-anchor="end" >20.0</text>
<text x="817" y="165.4" font-size="16" fill="#ffffff" text-anchor="end" >0.0</text>
<text x="817" y="203.29999999999998" font-size="16" fill="#ffffff" text-anchor="end" >-20.0</text>
<text x="817" y="241.2" font-size="16" fill="#ffffff" text-anchor="end" >-40.0</text>
<text x="817" y="279.1" font-size="16" fill="#ffffff" text-anchor="end" >-60.0</text>
<text x="920.3" y="293" font-size="16" fill="#ffffff" text-anchor="middle" >210.8</text>
<text x="1019.0999999999999" y="293" font-size="16" fill="#ffffff" text-anchor="middle" >211</text>
<text x="1117.8999999999999" y="293" font-size="16" fill="#ffffff" text-anchor="middle" >211.2</text>
<text x="1216.6999999999998" y="293" font-size="16" fill="#ffffff" text-anchor="middle" >211.4</text>
<text x="1315.5" y="293" font-size="16" fill="#ffffff" text-anchor="middle" >211.6</text>
<text x="1414.3" y="293" font-size="16" fill="#ffffff" text-anchor="middle" >211.8</text>
<text x="1513.1" y="293" font-size="16" fill="#ffffff" text-anchor="middle" >212</text>
<text x="1611.9" y="293" font-size="16" fill="#ffffff" text-anchor="middle" >212.2</text>
<text x="1710.6999999999998" y="293" font-size="16" fill="#ffffff" text-anchor="middle" >212.4</text>
<text x="1809.5" y="293" font-size="16" fill="#ffffff" text-anchor="middle" >212.6</text>
<text x="1261.09" y="320.7" font-size="20.6" fill="#ffffff" textLength="155.09" lengthAdjust="spacingAndGlyphs" >Frequency (MHz)</text>
<text transform="translate(751,247) rotate(-90)" font-size="20" fill="#fff" textLength="137" lengthAdjust="spacingAndGlyphs">Magnitude (dB)</text>
<rect x="0" y="338" width="1893" height="6" fill="#8a8a8a" />
<rect x="0" y="344" width="1893" height="49" fill="#262626" />
<line x1="0" y1="393.5" x2="1893" y2="393.5" stroke="#f0f0f0" stroke-width="1.5" />
<text x="12.72" y="379" font-size="20.5" fill="#ffffff" textLength="50.75" lengthAdjust="spacingAndGlyphs" font-style="italic" >DAB+</text>
<rect x="83.5" y="357.5" width="74" height="26" rx="3" fill="#262626" stroke="#8c8c8c" stroke-width="1"/>
<text x="85.88" y="374.7" font-size="15.3" fill="#ffffff" textLength="26.64" lengthAdjust="spacingAndGlyphs" >10B</text>
<path d="M131.7 366.2 H143.7 L137.7 372.9 Z" fill="#fff"/>
<line x1="171.5" y1="344" x2="171.5" y2="393" stroke="#e8e8e8" stroke-width="1" />
<rect x="172" y="344" width="100" height="49" fill="#b31818" />
<text x="189.85" y="377.5" font-size="21.5" fill="#f37474" textLength="81.57" lengthAdjust="spacingAndGlyphs" >EId: 1148</text>
<text x="295.57" y="377.5" font-size="21.5" fill="#e4e02c" textLength="165.42" lengthAdjust="spacingAndGlyphs" >rbb BRB/BLN K10B</text>
<text x="485.2" y="376.4" font-size="19.5" fill="#ffffff" textLength="102.72" lengthAdjust="spacingAndGlyphs" >2020-05-09</text>
<text x="598.37" y="376.4" font-size="19.5" fill="#ffffff" textLength="72.75" lengthAdjust="spacingAndGlyphs" >22:28:04</text>
<rect x="672" y="344" width="2.5" height="49" fill="#f4f4f4" />
<rect x="687.5" y="357.5" width="30" height="26" rx="3" fill="#262626" stroke="#8c8c8c" stroke-width="1"/>
<path d="M695.8 366.2 H707.8 L701.8 373.4 Z" fill="#fff"/>
<circle cx="762" cy="371" r="14.3" fill="#2866a4" />
<circle cx="762" cy="371" r="5.8" fill="#ff0a0a" />
<circle cx="805.7" cy="371" r="14.3" fill="#1d4268" />
<rect x="800" y="365.2" width="11.3" height="11.3" fill="#111111" />
<text x="854.94" y="377.8" font-size="20" fill="#ffffff" textLength="85.48" lengthAdjust="spacingAndGlyphs" >SId: D333</text>
<text x="976.09" y="377.8" font-size="29.5" fill="#f0f020" textLength="58.58" lengthAdjust="spacingAndGlyphs" >Fritz</text>
<text x="1070.0" y="377.8" font-size="20" fill="#ffffff" textLength="70.05" lengthAdjust="spacingAndGlyphs" >88 kbps</text>
<text x="1150.84" y="377.8" font-size="20" fill="#ffffff" textLength="69.49" lengthAdjust="spacingAndGlyphs" >EEP 3-A</text>
<path d="M1262.5 361.8 H1269.5 L1281.8 354.5 V385.2 L1269.5 377.7 H1262.5 Z M1269.5 361.8 V377.7" fill="none" stroke="#f0f0f0" stroke-width="1.6" stroke-linejoin="miter"/>
<rect x="1839.5" y="355.5" width="60" height="26.5" rx="3" fill="#262626" stroke="#8c8c8c" stroke-width="1"/>
<text x="1840.24" y="374" font-size="16.7" fill="#ffffff" textLength="32.26" lengthAdjust="spacingAndGlyphs" >DAB</text>
<path d="M1885.5 364.5 H1897.5 L1891.5 371.5 Z" fill="#fff"/>
<rect x="0" y="394" width="216" height="552" fill="#1b5886" />
<rect x="0" y="394" width="216" height="43" fill="#0f2b4c" />
<text x="5.21" y="424.9" font-size="25.2" fill="#f4f42a" textLength="45.95" lengthAdjust="spacingAndGlyphs" >Fritz</text>
<rect x="1.5" y="628.5" width="128" height="31" fill="#4a7aa2" stroke="#bcd4ea" stroke-width="1"/>
<text x="8.0" y="463.0" font-size="19.5" fill="#ffffff" textLength="103.92" lengthAdjust="spacingAndGlyphs" >Antenne CB</text>
<text x="8.0" y="494.47" font-size="19.5" fill="#ffffff" textLength="114.42" lengthAdjust="spacingAndGlyphs" >Antenne FFO</text>
<text x="8.0" y="525.94" font-size="19.5" fill="#ffffff" textLength="91.39" lengthAdjust="spacingAndGlyphs" >Antenne P</text>
<text x="8.0" y="557.41" font-size="19.5" fill="#ffffff" textLength="116.84" lengthAdjust="spacingAndGlyphs" >Antenne PBG</text>
<text x="8.0" y="588.88" font-size="19.5" fill="#ffffff" textLength="112.13" lengthAdjust="spacingAndGlyphs" >Antenne PZL</text>
<text x="7.06" y="620.35" font-size="19.5" fill="#ffffff" textLength="71.14" lengthAdjust="spacingAndGlyphs" >COSMO</text>
<text x="5.96" y="651.8199999999999" font-size="19.5" fill="#ffffff" textLength="39.84" lengthAdjust="spacingAndGlyphs" >Fritz</text>
<text x="5.7" y="683.29" font-size="19.5" fill="#ffffff" textLength="81.97" lengthAdjust="spacingAndGlyphs" >Inforadio</text>
<text x="6.25" y="714.76" font-size="19.5" fill="#ffffff" textLength="57.68" lengthAdjust="spacingAndGlyphs" >radio1</text>
<text x="6.32" y="746.23" font-size="19.5" fill="#ffffff" textLength="87.71" lengthAdjust="spacingAndGlyphs" >radio1 CB</text>
<text x="6.34" y="777.7" font-size="19.5" fill="#ffffff" textLength="97.97" lengthAdjust="spacingAndGlyphs" >radio1 FFO</text>
<text x="6.28" y="809.17" font-size="19.5" fill="#ffffff" textLength="74.52" lengthAdjust="spacingAndGlyphs" >rbb 88.8</text>
<text x="6.25" y="840.64" font-size="19.5" fill="#ffffff" textLength="84.42" lengthAdjust="spacingAndGlyphs" >rbbKultur</text>
<rect x="216" y="394" width="6" height="552" fill="#eeeeea" />
<rect x="222" y="394" width="227" height="552" fill="#1b5886" />
<rect x="222" y="394" width="227" height="43" fill="#0f2b4c" />
<text x="228.09" y="424.9" font-size="25" fill="#ffffff" textLength="180.5" lengthAdjust="spacingAndGlyphs" >Service Quality</text>
<rect x="384.4" y="450.3" width="10.600000000000023" height="31" fill="#ff0000" />
<rect x="395" y="450.3" width="40" height="31" fill="#808080" />
<text x="234.77" y="472.7" font-size="17.9" fill="#ffffff" textLength="69.67" lengthAdjust="spacingAndGlyphs" >SNR (dB)</text>
<text x="410" y="472.3" font-size="15" fill="#ffffff" text-anchor="middle" >7.2</text>
<rect x="384.4" y="488.90000000000003" width="50.60000000000002" height="31" fill="#007d00" />
<text x="234.17" y="511.3" font-size="17.9" fill="#ffffff" textLength="79.17" lengthAdjust="spacingAndGlyphs" >FIC (ok %)</text>
<text x="410" y="510.90000000000003" font-size="15" fill="#ffffff" text-anchor="middle" >99</text>
<rect x="384.4" y="527.5" width="5.100000000000023" height="31" fill="#ff0000" />
<rect x="389.5" y="527.5" width="45.5" height="31" fill="#808080" />
<text x="234.19" y="550.5" font-size="17.9" fill="#ffffff" textLength="74.82" lengthAdjust="spacingAndGlyphs" >RS (ok %)</text>
<text x="410" y="549.5" font-size="15" fill="#ffffff" text-anchor="middle" >8</text>
<rect x="384.4" y="566.1" width="50.60000000000002" height="31" fill="#007d00" />
<text x="234.08" y="588.3" font-size="17.9" fill="#ffffff" textLength="94.88" lengthAdjust="spacingAndGlyphs" >Null Symbol</text>
<rect x="384.4" y="604.7" width="12.600000000000023" height="31" fill="#007d00" />
<rect x="397" y="604.7" width="38" height="31" fill="#808080" />
<text x="234.73" y="626" font-size="17.9" fill="#ffffff" textLength="133.63" lengthAdjust="spacingAndGlyphs" >SymbolTime (ms)</text>
<text x="410" y="626.7" font-size="15" fill="#ffffff" text-anchor="middle" >0.35</text>
<rect x="384.4" y="643.3" width="32.60000000000002" height="31" fill="#007d00" />
<rect x="417" y="643.3" width="18" height="31" fill="#808080" />
<text x="234.14" y="664.7" font-size="17.9" fill="#ffffff" textLength="125.31" lengthAdjust="spacingAndGlyphs" >FrameTime (ms)</text>
<text x="410" y="665.3" font-size="15" fill="#ffffff" text-anchor="middle" >95.9</text>
<rect x="449" y="394" width="4" height="552" fill="#c8d2dc" />
<rect x="453" y="394" width="466" height="552" fill="#1b5886" />
<rect x="453" y="394" width="466" height="43" fill="#0f2b4c" />
<path d="M463.5 437 V405 Q463.5 403 465.5 403 H525.5 Q537.5 403 537.5 415 V437 Z" fill="#8a8a8a"/>
<path d="M538.7 437 V405 Q538.7 403 540.7 403 H580 Q592 403 592 415 V437 Z" fill="#1b5886"/>
<path d="M592.6 437 V405 Q592.6 403 594.6 403 H668.1 Q680.1 403 680.1 415 V437 Z" fill="#8a8a8a"/>
<path d="M681.9 437 V405 Q681.9 403 683.9 403 H740.9 Q752.9 403 752.9 415 V437 Z" fill="#8a8a8a"/>
<path d="M754.2 437 V405 Q754.2 403 756.2 403 H848.7 Q860.7 403 860.7 415 V437 Z" fill="#8a8a8a"/>
<text x="478.33" y="430.1" font-size="22" fill="#d8d8d8" textLength="43.12" lengthAdjust="spacingAndGlyphs" >Sync</text>
<text x="553.59" y="430.1" font-size="22" fill="#ffffff" textLength="23.77" lengthAdjust="spacingAndGlyphs" >TII</text>
<text x="609.1" y="430.1" font-size="22" fill="#d8d8d8" textLength="56.14" lengthAdjust="spacingAndGlyphs" >Audio</text>
<text x="697.7" y="430.1" font-size="22" fill="#d8d8d8" textLength="40.01" lengthAdjust="spacingAndGlyphs" >AAC</text>
<text x="769.62" y="430.1" font-size="22" fill="#d8d8d8" textLength="75.38" lengthAdjust="spacingAndGlyphs" >Options</text>
<circle cx="502" cy="455.5" r="6" fill="#ff0000" />
<rect x="533" y="448.5" width="10.8" height="13.3" fill="#0d2846" />
<line x1="471" y1="474.5" x2="781" y2="474.5" stroke="#88aed0" stroke-width="1.2" />
<line x1="793.5" y1="437" x2="793.5" y2="475" stroke="#5a86ae" stroke-width="1" />
<text x="800.05" y="475.8" font-size="18.5" fill="#ffffff" textLength="77.01" lengthAdjust="spacingAndGlyphs" >Threshold</text>
<text x="470.7" y="513.7" font-size="18.3" fill="#ffffff" textLength="60.51" lengthAdjust="spacingAndGlyphs" >Pattern</text>
<text x="554.51" y="513.7" font-size="18.3" fill="#ffffff" textLength="59.51" lengthAdjust="spacingAndGlyphs" >MainId</text>
<text x="637.88" y="513.7" font-size="18.3" fill="#ffffff" textLength="47.88" lengthAdjust="spacingAndGlyphs" >SubId</text>
<text x="709.64" y="513.7" font-size="18.3" fill="#ffffff" textLength="72.21" lengthAdjust="spacingAndGlyphs" >Strength</text>
<line x1="471" y1="518.7" x2="781" y2="518.7" stroke="#a8c4dc" stroke-width="1.2" />
<text x="473.32" y="550.7" font-size="17.7" fill="#ffffff" textLength="36.05" lengthAdjust="spacingAndGlyphs" >0x6c</text>
<text x="557.68" y="550.7" font-size="17.7" fill="#ffffff" textLength="20.1" lengthAdjust="spacingAndGlyphs" >30</text>
<text x="639.74" y="550.7" font-size="17.7" fill="#ffffff" textLength="10.54" lengthAdjust="spacingAndGlyphs" >5</text>
<text x="712.52" y="550.7" font-size="17.7" fill="#ffffff" textLength="32.87" lengthAdjust="spacingAndGlyphs" >0.96</text>
<text x="473.32" y="581.6" font-size="17.7" fill="#ffffff" textLength="36.05" lengthAdjust="spacingAndGlyphs" >0x6c</text>
<text x="557.68" y="581.6" font-size="17.7" fill="#ffffff" textLength="20.1" lengthAdjust="spacingAndGlyphs" >30</text>
<text x="639.79" y="581.6" font-size="17.7" fill="#ffffff" textLength="9.84" lengthAdjust="spacingAndGlyphs" >3</text>
<text x="712.52" y="581.6" font-size="17.7" fill="#ffffff" textLength="32.87" lengthAdjust="spacingAndGlyphs" >0.38</text>
<text x="473.32" y="613.6" font-size="17.7" fill="#ffffff" textLength="36.05" lengthAdjust="spacingAndGlyphs" >0x6c</text>
<text x="557.68" y="613.6" font-size="17.7" fill="#ffffff" textLength="20.1" lengthAdjust="spacingAndGlyphs" >30</text>
<text x="640.23" y="613.6" font-size="17.7" fill="#ffffff" textLength="8.69" lengthAdjust="spacingAndGlyphs" >1</text>
<text x="712.53" y="613.6" font-size="17.7" fill="#ffffff" textLength="32.79" lengthAdjust="spacingAndGlyphs" >0.10</text>
<line x1="835" y1="501.4" x2="835" y2="634" stroke="#e2e2e2" stroke-width="3" />
<circle cx="835" cy="640.7" r="8" fill="url(#thumb)" />
<text x="816.31" y="675" font-size="17.5" fill="#ffffff" textLength="33.58" lengthAdjust="spacingAndGlyphs" >0.02</text>
<rect x="919" y="394" width="6" height="552" fill="#f0f0ee" />
<rect x="925" y="394" width="968" height="25" fill="#0f2d50" />
<text x="1289.41" y="411.8" font-size="18.5" fill="#ffffff" textLength="266.69" lengthAdjust="spacingAndGlyphs" >Channel Impulse Response (CIR)</text>
<path d="M1876.8 399.8 H1891.6 L1884.2 412.8 Z" fill="none" stroke="#c8d8ea" stroke-width="1.15"/>
<rect x="925" y="419" width="968" height="274" fill="#000000" />
<circle cx="945.9" cy="441.4" r="8.5" fill="#e2e2e2" />
<text x="958.28" y="447.7" font-size="15.7" fill="#ffffff" textLength="43.62" lengthAdjust="spacingAndGlyphs" >Freeze</text>
<circle cx="1035" cy="441.4" r="8.5" fill="#e2e2e2" />
<text x="1047.25" y="447.7" font-size="15.7" fill="#ffffff" textLength="57.23" lengthAdjust="spacingAndGlyphs" >Gradient</text>
<rect x="1118" y="421" width="6" height="206" rx="3" fill="#a6a6a6"/>
<line x1="1131.5" y1="419" x2="1131.5" y2="693" stroke="#2a2a2a" stroke-width="1" />
<text x="943.53" y="498.4" font-size="15.1" fill="#ffffff" textLength="111.72" lengthAdjust="spacingAndGlyphs" >Smoothing Level</text>
<line x1="946.6" y1="509" x2="946.6" y2="514.5" stroke="#9a9a9a" stroke-width="1.3" />
<line x1="962.86" y1="509" x2="962.86" y2="514.5" stroke="#9a9a9a" stroke-width="1.3" />
<line x1="979.12" y1="509" x2="979.12" y2="514.5" stroke="#9a9a9a" stroke-width="1.3" />
<line x1="995.38" y1="509" x2="995.38" y2="514.5" stroke="#9a9a9a" stroke-width="1.3" />
<line x1="1011.64" y1="509" x2="1011.64" y2="514.5" stroke="#9a9a9a" stroke-width="1.3" />
<line x1="1027.9" y1="509" x2="1027.9" y2="514.5" stroke="#9a9a9a" stroke-width="1.3" />
<line x1="1044.16" y1="509" x2="1044.16" y2="514.5" stroke="#9a9a9a" stroke-width="1.3" />
<line x1="1060.42" y1="509" x2="1060.42" y2="514.5" stroke="#9a9a9a" stroke-width="1.3" />
<line x1="1076.68" y1="509" x2="1076.68" y2="514.5" stroke="#9a9a9a" stroke-width="1.3" />
<line x1="1092.94" y1="509" x2="1092.94" y2="514.5" stroke="#9a9a9a" stroke-width="1.3" />
<line x1="1109.2" y1="509" x2="1109.2" y2="514.5" stroke="#9a9a9a" stroke-width="1.3" />
<line x1="938" y1="523" x2="1110" y2="523" stroke="#e6e6e6" stroke-width="3" />
<circle cx="1028" cy="523" r="8" fill="url(#thumb)" />
<text x="943.45" y="565.7" font-size="14.9" fill="#ffffff" textLength="52.57" lengthAdjust="spacingAndGlyphs" >Zoom X</text>
<line x1="940" y1="585.1" x2="1110" y2="585.1" stroke="#e6e6e6" stroke-width="3" />
<circle cx="946.5" cy="585.1" r="8" fill="url(#thumb)" />
<text x="943.45" y="628.8" font-size="14.9" fill="#ffffff" textLength="52.6" lengthAdjust="spacingAndGlyphs" >Zoom Y</text>
<line x1="940" y1="647.4" x2="1110" y2="647.4" stroke="#e6e6e6" stroke-width="3" />
<circle cx="946.5" cy="647.4" r="8" fill="url(#thumb)" />
<text x="943.75" y="690.5" font-size="14.9" fill="#ffffff" textLength="40.1" lengthAdjust="spacingAndGlyphs" >x-Axis</text>
<rect x="1358.1342499999998" y="439.4" width="16.572000000000116" height="194.60000000000002" fill="#3e3e3e" />
<line x1="1358.6342499999998" y1="439.4" x2="1358.6342499999998" y2="634" stroke="#606060" stroke-width="1.5" />
<line x1="1248" y1="439.5" x2="1867.5" y2="439.5" stroke="#a0a0a0" stroke-width="1" />
<line x1="1248" y1="478.5" x2="1867.5" y2="478.5" stroke="#a0a0a0" stroke-width="1" />
<line x1="1248" y1="517.5" x2="1867.5" y2="517.5" stroke="#a0a0a0" stroke-width="1" />
<line x1="1248" y1="556.5" x2="1867.5" y2="556.5" stroke="#a0a0a0" stroke-width="1" />
<line x1="1248" y1="595.5" x2="1867.5" y2="595.5" stroke="#a0a0a0" stroke-width="1" />
<line x1="1248" y1="634.5" x2="1867.5" y2="634.5" stroke="#a0a0a0" stroke-width="1" />
<line x1="1276.5" y1="439.4" x2="1276.5" y2="634" stroke="#a0a0a0" stroke-width="1" />
<line x1="1318.5" y1="439.4" x2="1318.5" y2="634" stroke="#a0a0a0" stroke-width="1" />
<line x1="1359.5" y1="439.4" x2="1359.5" y2="634" stroke="#a0a0a0" stroke-width="1" />
<line x1="1401.5" y1="439.4" x2="1401.5" y2="634" stroke="#a0a0a0" stroke-width="1" />
<line x1="1442.5" y1="439.4" x2="1442.5" y2="634" stroke="#a0a0a0" stroke-width="1" />
<line x1="1483.5" y1="439.4" x2="1483.5" y2="634" stroke="#a0a0a0" stroke-width="1" />
<line x1="1525.5" y1="439.4" x2="1525.5" y2="634" stroke="#a0a0a0" stroke-width="1" />
<line x1="1566.5" y1="439.4" x2="1566.5" y2="634" stroke="#a0a0a0" stroke-width="1" />
<line x1="1608.5" y1="439.4" x2="1608.5" y2="634" stroke="#a0a0a0" stroke-width="1" />
<line x1="1649.5" y1="439.4" x2="1649.5" y2="634" stroke="#a0a0a0" stroke-width="1" />
<line x1="1691.5" y1="439.4" x2="1691.5" y2="634" stroke="#a0a0a0" stroke-width="1" />
<line x1="1732.5" y1="439.4" x2="1732.5" y2="634" stroke="#a0a0a0" stroke-width="1" />
<line x1="1773.5" y1="439.4" x2="1773.5" y2="634" stroke="#a0a0a0" stroke-width="1" />
<line x1="1815.5" y1="439.4" x2="1815.5" y2="634" stroke="#a0a0a0" stroke-width="1" />
<line x1="1856.5" y1="439.4" x2="1856.5" y2="634" stroke="#a0a0a0" stroke-width="1" />
<line x1="1374.70625" y1="439.4" x2="1374.70625" y2="634" stroke="#e8e030" stroke-width="1" stroke-dasharray="1.5 2"/>
<polyline points="1247.3,576.5 1248.3,576.8 1249.4,577.5 1250.4,585.9 1251.5,584.5 1252.5,585.7 1253.5,577.1 1254.6,575.6 1255.6,572.9 1256.6,577.5 1257.7,575.6 1258.7,567.7 1259.7,576.4 1260.8,580.0 1261.8,587.3 1262.8,592.4 1263.9,588.2 1264.9,583.3 1266.0,590.6 1267.0,594.6 1268.0,583.6 1269.1,575.9 1270.1,568.2 1271.1,575.7 1272.2,574.8 1273.2,574.7 1274.2,590.9 1275.3,595.1 1276.3,582.2 1277.3,565.5 1278.4,561.7 1279.4,569.8 1280.5,566.4 1281.5,566.0 1282.5,573.3 1283.6,573.5 1284.6,578.5 1285.6,580.2 1286.7,581.5 1287.7,589.2 1288.7,588.6 1289.8,590.3 1290.8,592.0 1291.8,595.5 1292.9,588.0 1293.9,581.7 1295.0,578.4 1296.0,584.5 1297.0,587.9 1298.1,594.0 1299.1,592.5 1300.1,583.8 1301.2,587.6 1302.2,584.3 1303.2,590.2 1304.3,592.1 1305.3,591.6 1306.3,586.0 1307.4,578.6 1308.4,595.7 1309.5,594.1 1310.5,556.2 1311.5,570.7 1312.6,569.0 1313.6,568.2 1314.6,576.5 1315.7,581.6 1316.7,580.9 1317.7,575.9 1318.8,580.3 1319.8,574.1 1320.8,576.7 1321.9,576.6 1322.9,572.6 1324.0,573.8 1325.0,578.4 1326.0,579.5 1327.1,581.3 1328.1,579.6 1329.1,582.9 1330.2,581.5 1331.2,564.3 1332.2,563.3 1333.3,563.0 1334.3,562.7 1335.3,567.4 1336.4,565.4 1337.4,566.5 1338.5,569.8 1339.5,571.0 1340.5,572.6 1341.6,581.9 1342.6,582.5 1343.6,589.3 1344.7,588.1 1345.7,587.1 1346.7,590.4 1347.8,586.5 1348.8,585.1 1349.8,588.6 1350.9,593.1 1351.9,578.2 1353.0,570.8 1354.0,573.8 1355.0,576.2 1356.1,579.9 1357.1,575.8 1358.1,569.9 1359.2,563.0 1360.2,571.6 1361.2,575.2 1362.3,570.2 1363.3,558.4 1364.3,561.4 1365.4,555.3 1366.4,552.6 1367.5,554.9 1368.5,558.5 1369.5,558.7 1370.6,546.9 1371.6,532.3 1372.6,518.0 1373.7,497.2 1374.7,476.4 1375.7,504.8 1376.8,526.0 1377.8,534.9 1378.8,538.6 1379.9,531.4 1380.9,537.3 1382.0,545.6 1383.0,558.1 1384.0,556.6 1385.1,560.4 1386.1,567.3 1387.1,551.3 1388.2,551.7 1389.2,547.5 1390.2,547.7 1391.3,543.6 1392.3,547.9 1393.3,558.7 1394.4,550.4 1395.4,554.8 1396.5,550.6 1397.5,540.9 1398.5,528.3 1399.6,510.1 1400.6,479.6 1401.6,465.1 1402.7,480.4 1403.7,491.7 1404.7,505.2 1405.8,521.8 1406.8,534.8 1407.9,542.7 1408.9,544.2 1409.9,541.3 1411.0,549.0 1412.0,549.2 1413.0,553.5 1414.1,562.5 1415.1,556.2 1416.1,553.8 1417.2,551.7 1418.2,541.2 1419.2,554.2 1420.3,563.7 1421.3,559.8 1422.4,561.7 1423.4,556.6 1424.4,554.6 1425.5,559.2 1426.5,563.1 1427.5,562.7 1428.6,567.9 1429.6,567.4 1430.6,563.9 1431.7,556.7 1432.7,565.9 1433.7,577.2 1434.8,578.2 1435.8,566.4 1436.9,565.9 1437.9,568.1 1438.9,574.6 1440.0,578.3 1441.0,576.1 1442.0,569.9 1443.1,572.8 1444.1,573.1 1445.1,576.9 1446.2,572.2 1447.2,572.1 1448.2,571.8 1449.3,565.8 1450.3,560.9 1451.4,555.4 1452.4,559.2 1453.4,562.3 1454.5,572.0 1455.5,579.0 1456.5,572.0 1457.6,564.1 1458.6,560.8 1459.6,568.6 1460.7,577.2 1461.7,583.0 1462.7,579.8 1463.8,571.5 1464.8,568.1 1465.9,561.5 1466.9,568.1 1467.9,571.1 1469.0,571.8 1470.0,573.9 1471.0,580.8 1472.1,588.6 1473.1,574.1 1474.1,566.0 1475.2,567.3 1476.2,574.0 1477.2,582.3 1478.3,581.2 1479.3,583.0 1480.4,581.2 1481.4,576.5 1482.4,569.2 1483.5,568.1 1484.5,574.4 1485.5,584.3 1486.6,584.3 1487.6,578.5 1488.6,581.1 1489.7,583.3 1490.7,590.6 1491.7,588.5 1492.8,589.9 1493.8,584.0 1494.9,581.2 1495.9,572.8 1496.9,571.6 1498.0,583.2 1499.0,583.1 1500.0,577.1 1501.1,570.4 1502.1,575.2 1503.1,579.2 1504.2,583.5 1505.2,575.2 1506.2,580.1 1507.3,577.1 1508.3,563.6 1509.4,554.4 1510.4,545.9 1511.4,528.9 1512.5,550.4 1513.5,565.8 1514.5,570.6 1515.6,569.2 1516.6,571.8 1517.6,568.1 1518.7,570.9 1519.7,582.0 1520.7,588.4 1521.8,590.2 1522.8,588.7 1523.9,580.8 1524.9,572.2 1525.9,570.0 1527.0,565.6 1528.0,568.3 1529.0,567.2 1530.1,575.8 1531.1,581.2 1532.1,586.2 1533.2,583.8 1534.2,587.8 1535.2,579.9 1536.3,572.6 1537.3,566.3 1538.4,563.5 1539.4,568.6 1540.4,576.4 1541.5,586.9 1542.5,585.5 1543.5,573.6 1544.6,566.8 1545.6,569.3 1546.6,566.9 1547.7,565.5 1548.7,571.8 1549.7,572.4 1550.8,576.2 1551.8,582.7 1552.9,578.5 1553.9,581.2 1554.9,591.3 1556.0,594.4 1557.0,590.9 1558.0,591.2 1559.1,582.7 1560.1,564.7 1561.1,565.5 1562.2,574.3 1563.2,589.8 1564.2,582.7 1565.3,573.0 1566.3,576.6 1567.4,581.2 1568.4,580.1 1569.4,574.9 1570.5,568.7 1571.5,553.0 1572.5,536.7 1573.6,555.3 1574.6,566.1 1575.6,577.9 1576.7,584.3 1577.7,581.7 1578.7,586.4 1579.8,584.9 1580.8,581.9 1581.9,574.6 1582.9,569.9 1583.9,581.3 1585.0,586.2 1586.0,580.4 1587.0,569.6 1588.1,555.7 1589.1,530.9 1590.1,553.0 1591.2,560.7 1592.2,563.6 1593.2,563.2 1594.3,567.7 1595.3,571.5 1596.4,573.0 1597.4,577.8 1598.4,583.8 1599.5,579.3 1600.5,567.8 1601.5,565.8 1602.6,579.4 1603.6,587.9 1604.6,591.9 1605.7,589.4 1606.7,588.1 1607.8,590.8 1608.8,589.2 1609.8,587.8 1610.9,583.1 1611.9,582.7 1612.9,579.9 1614.0,594.3 1615.0,593.2 1616.0,593.3 1617.1,587.0 1618.1,584.7 1619.1,587.1 1620.2,586.9 1621.2,580.9 1622.3,576.8 1623.3,575.1 1624.3,589.9 1625.4,593.3 1626.4,590.5 1627.4,586.6 1628.5,584.8 1629.5,572.9 1630.5,567.7 1631.6,570.4 1632.6,569.3 1633.6,568.0 1634.7,572.9 1635.7,572.1 1636.8,576.6 1637.8,573.9 1638.8,571.1 1639.9,575.2 1640.9,578.9 1641.9,574.1 1643.0,580.2 1644.0,590.7 1645.0,589.7 1646.1,587.6 1647.1,592.6 1648.1,595.2 1649.2,597.0 1650.2,585.6 1651.3,573.2 1652.3,569.0 1653.3,569.6 1654.4,572.9 1655.4,575.4 1656.4,565.1 1657.5,565.1 1658.5,574.6 1659.5,591.7 1660.6,592.8 1661.6,586.5 1662.6,573.9 1663.7,574.2 1664.7,577.6 1665.8,583.1 1666.8,580.9 1667.8,575.5 1668.9,575.9 1669.9,576.0 1670.9,584.2 1672.0,579.1 1673.0,565.0 1674.0,568.0 1675.1,576.5 1676.1,593.1 1677.1,587.2 1678.2,587.0 1679.2,575.2 1680.3,573.2 1681.3,570.5 1682.3,576.4 1683.4,572.3 1684.4,566.3 1685.4,572.8 1686.5,571.8 1687.5,572.7 1688.5,568.4 1689.6,571.6 1690.6,568.2 1691.6,569.8 1692.7,563.2 1693.7,560.2 1694.8,552.3 1695.8,560.9 1696.8,566.6 1697.9,579.7 1698.9,578.1 1699.9,574.6 1701.0,576.5 1702.0,568.2 1703.0,570.1 1704.1,570.0 1705.1,572.7 1706.1,570.8 1707.2,573.5 1708.2,578.2 1709.3,582.5 1710.3,574.2 1711.3,575.1 1712.4,571.9 1713.4,570.1 1714.4,565.1 1715.5,569.8 1716.5,575.6 1717.5,581.8 1718.6,577.6 1719.6,574.0 1720.6,580.6 1721.7,581.3 1722.7,582.9 1723.8,584.2 1724.8,572.7 1725.8,574.2 1726.9,579.3 1727.9,575.6 1728.9,584.9 1730.0,591.6 1731.0,588.9 1732.0,582.5 1733.1,577.1 1734.1,573.4 1735.1,565.4 1736.2,568.1 1737.2,570.2 1738.3,566.7 1739.3,571.3 1740.3,568.1 1741.4,572.7 1742.4,575.2 1743.4,583.6 1744.5,578.4 1745.5,579.8 1746.5,576.2 1747.6,578.1 1748.6,575.0 1749.6,575.5 1750.7,582.4 1751.7,582.0 1752.8,575.6 1753.8,571.6 1754.8,574.1 1755.9,581.8 1756.9,593.1 1757.9,592.3 1759.0,579.4 1760.0,576.4 1761.0,575.1 1762.1,590.8 1763.1,591.7 1764.1,582.3 1765.2,574.4 1766.2,574.4 1767.3,580.4 1768.3,581.7 1769.3,583.9 1770.4,591.1 1771.4,586.3 1772.4,576.3 1773.5,569.5 1774.5,573.1 1775.5,577.4 1776.6,578.4 1777.6,582.2 1778.6,577.9 1779.7,575.9 1780.7,568.2 1781.8,571.6 1782.8,577.0 1783.8,585.2 1784.9,584.5 1785.9,588.0 1786.9,592.2 1788.0,593.7 1789.0,583.6 1790.0,580.8 1791.1,578.7 1792.1,576.0 1793.1,577.4 1794.2,588.3 1795.2,585.9 1796.3,583.7 1797.3,588.6 1798.3,584.2 1799.4,571.7 1800.4,570.9 1801.4,566.2 1802.5,573.0 1803.5,578.2 1804.5,582.3 1805.6,583.4 1806.6,577.7 1807.6,569.4 1808.7,570.3 1809.7,571.5 1810.8,584.7 1811.8,583.5 1812.8,581.4 1813.9,570.5 1814.9,582.5 1815.9,582.6 1817.0,587.2 1818.0,583.7 1819.0,581.0 1820.1,581.4 1821.1,569.4 1822.2,566.3 1823.2,566.7 1824.2,567.1 1825.3,571.5 1826.3,565.5 1827.3,570.8 1828.4,569.7 1829.4,583.4 1830.4,581.7 1831.5,576.6 1832.5,580.2 1833.5,578.4 1834.6,587.0 1835.6,589.1 1836.7,589.8 1837.7,584.9 1838.7,584.4 1839.8,581.4 1840.8,581.4 1841.8,574.9 1842.9,569.1 1843.9,571.1 1844.9,569.0 1846.0,566.9 1847.0,575.0 1848.0,575.5 1849.1,573.8 1850.1,574.0 1851.2,568.3 1852.2,568.6 1853.2,582.7 1854.3,585.6 1855.3,588.9 1856.3,587.8 1857.4,589.9 1858.4,583.1 1859.4,585.3 1860.5,580.4 1861.5,588.0 1862.5,581.6 1863.6,585.6 1864.6,587.7 1865.7,587.6 1866.7,582.6 1867.7,580.2 1868.8,577.6 1869.8,574.4" fill="none" stroke="#f0f0f0" stroke-width="1.3" stroke-linejoin="round"/>
<rect x="1248" y="439.4" width="619.5" height="194.60000000000002" fill="none" stroke="#9a9a9a" stroke-width="2"/>
<circle cx="1374.9" cy="474.2" r="4.8" fill="#ee1010" />
<circle cx="1401.1" cy="457.7" r="5.2" fill="#f4ec10" />
<circle cx="1509.5" cy="527.7" r="5.2" fill="#1ea0e6" />
<circle cx="1572.5" cy="533.6" r="5.2" fill="#8a2ee0" />
<text x="1237.5" y="445.0" font-size="16" fill="#ffffff" text-anchor="end" >-10.0</text>
<text x="1237.5" y="483.92" font-size="16" fill="#ffffff" text-anchor="end" >-20.0</text>
<text x="1237.5" y="522.84" font-size="16" fill="#ffffff" text-anchor="end" >-30.0</text>
<text x="1237.5" y="561.76" font-size="16" fill="#ffffff" text-anchor="end" >-40.0</text>
<text x="1237.5" y="600.68" font-size="16" fill="#ffffff" text-anchor="end" >-50.0</text>
<text x="1237.5" y="639.6" font-size="16" fill="#ffffff" text-anchor="end" >-60.0</text>
<text x="1276.31" y="652" font-size="13" fill="#ffffff" text-anchor="middle" >-60</text>
<text x="1317.74" y="652" font-size="13" fill="#ffffff" text-anchor="middle" >-40</text>
<text x="1359.1699999999998" y="652" font-size="13" fill="#ffffff" text-anchor="middle" >-20</text>
<text x="1400.6" y="652" font-size="13" fill="#ffffff" text-anchor="middle" >0</text>
<text x="1442.03" y="652" font-size="13" fill="#ffffff" text-anchor="middle" >20</text>
<text x="1483.4599999999998" y="652" font-size="13" fill="#ffffff" text-anchor="middle" >40</text>
<text x="1524.8899999999999" y="652" font-size="13" fill="#ffffff" text-anchor="middle" >60</text>
<text x="1566.32" y="652" font-size="13" fill="#ffffff" text-anchor="middle" >80</text>
<text x="1607.75" y="652" font-size="13" fill="#ffffff" text-anchor="middle" >100</text>
<text x="1649.1799999999998" y="652" font-size="13" fill="#ffffff" text-anchor="middle" >120</text>
<text x="1690.61" y="652" font-size="13" fill="#ffffff" text-anchor="middle" >140</text>
<text x="1732.04" y="652" font-size="13" fill="#ffffff" text-anchor="middle" >160</text>
<text x="1773.4699999999998" y="652" font-size="13" fill="#ffffff" text-anchor="middle" >180</text>
<text x="1814.8999999999999" y="652" font-size="13" fill="#ffffff" text-anchor="middle" >200</text>
<text x="1856.33" y="652" font-size="13" fill="#ffffff" text-anchor="middle" >220</text>
<text x="1463.32" y="675.6" font-size="16.6" fill="#ffffff" textLength="188.9" lengthAdjust="spacingAndGlyphs" >Distance Difference (km)</text>
<text transform="translate(1178.5,593.5) rotate(-90)" font-size="15.5" font-weight="bold" fill="#fff" textLength="112.7" lengthAdjust="spacingAndGlyphs">Magnitude (dB)</text>
<rect x="925" y="693" width="968" height="6" fill="#8a8a8a" />
<rect x="925" y="699" width="968" height="25" fill="#0f2d50" />
<text x="1378.85" y="717" font-size="19" fill="#ffffff" textLength="88.27" lengthAdjust="spacingAndGlyphs" >TII Carriers</text>
<path d="M1876.8 704.8 H1891.6 L1884.2 717.8 Z" fill="none" stroke="#c8d8ea" stroke-width="1.15"/>
<rect x="925" y="724" width="968" height="222" fill="#000000" />
<line x1="1035" y1="743.5" x2="1859" y2="743.5" stroke="#a0a0a0" stroke-width="1" />
<line x1="1035" y1="776.5" x2="1859" y2="776.5" stroke="#a0a0a0" stroke-width="1" />
<line x1="1035" y1="809.5" x2="1859" y2="809.5" stroke="#a0a0a0" stroke-width="1" />
<line x1="1035" y1="842.5" x2="1859" y2="842.5" stroke="#a0a0a0" stroke-width="1" />
<line x1="1035" y1="875.5" x2="1859" y2="875.5" stroke="#a0a0a0" stroke-width="1" />
<line x1="1035" y1="908.5" x2="1859" y2="908.5" stroke="#a0a0a0" stroke-width="1" />
<line x1="1085.5" y1="743.2" x2="1085.5" y2="907.6" stroke="#a0a0a0" stroke-width="1" />
<line x1="1166.5" y1="743.2" x2="1166.5" y2="907.6" stroke="#a0a0a0" stroke-width="1" />
<line x1="1246.5" y1="743.2" x2="1246.5" y2="907.6" stroke="#a0a0a0" stroke-width="1" />
<line x1="1327.5" y1="743.2" x2="1327.5" y2="907.6" stroke="#a0a0a0" stroke-width="1" />
<line x1="1408.5" y1="743.2" x2="1408.5" y2="907.6" stroke="#a0a0a0" stroke-width="1" />
<line x1="1489.5" y1="743.2" x2="1489.5" y2="907.6" stroke="#a0a0a0" stroke-width="1" />
<line x1="1569.5" y1="743.2" x2="1569.5" y2="907.6" stroke="#a0a0a0" stroke-width="1" />
<line x1="1650.5" y1="743.2" x2="1650.5" y2="907.6" stroke="#a0a0a0" stroke-width="1" />
<line x1="1731.5" y1="743.2" x2="1731.5" y2="907.6" stroke="#a0a0a0" stroke-width="1" />
<line x1="1811.5" y1="743.2" x2="1811.5" y2="907.6" stroke="#a0a0a0" stroke-width="1" />
<line x1="1138.312" y1="743.2" x2="1138.312" y2="907.6" stroke="#f0e020" stroke-width="2" stroke-dasharray="2 2.2"/>
<line x1="1293.256" y1="743.2" x2="1293.256" y2="907.6" stroke="#f0e020" stroke-width="2" stroke-dasharray="2 2.2"/>
<line x1="1448.2" y1="743.2" x2="1448.2" y2="907.6" stroke="#f0e020" stroke-width="2" stroke-dasharray="2 2.2"/>
<line x1="1603.144" y1="743.2" x2="1603.144" y2="907.6" stroke="#f0e020" stroke-width="2" stroke-dasharray="2 2.2"/>
<line x1="1758.0880000000002" y1="743.2" x2="1758.0880000000002" y2="907.6" stroke="#f0e020" stroke-width="2" stroke-dasharray="2 2.2"/>
<path d="M1158.5 907.6 V886.5 L1159.4 884.5 L1160.3 886.5 V907.6 Z" fill="#d4e02a"/>
<path d="M1159.6 907.6 V818 L1160.8 816 L1162.0 818 V907.6 Z" fill="#a4d898"/>
<path d="M1161.6 907.6 V759.7 L1162.5 756.7 L1163.4 759.7 V907.6 Z" fill="#f2f2f2"/>
<path d="M1178.0 907.6 V887 L1178.9 885 L1179.8 887 V907.6 Z" fill="#d4e02a"/>
<path d="M1179.1 907.6 V832 L1180.3 830 L1181.5 832 V907.6 Z" fill="#a4d898"/>
<path d="M1181.1 907.6 V750.8 L1182 747.8 L1182.9 750.8 V907.6 Z" fill="#f2f2f2"/>
<path d="M1216.5 907.6 V892.5 L1217.4 890.5 L1218.3 892.5 V907.6 Z" fill="#d4e02a"/>
<path d="M1217.6 907.6 V843 L1218.8 841 L1220.0 843 V907.6 Z" fill="#a4d898"/>
<path d="M1219.6 907.6 V777 L1220.5 774 L1221.4 777 V907.6 Z" fill="#f2f2f2"/>
<path d="M1235.8 907.6 V880 L1236.7 878 L1237.6 880 V907.6 Z" fill="#d4e02a"/>
<path d="M1236.8999999999999 907.6 V856.5 L1238.1 854.5 L1239.3 856.5 V907.6 Z" fill="#a4d898"/>
<path d="M1238.8999999999999 907.6 V781.5 L1239.8 778.5 L1240.7 781.5 V907.6 Z" fill="#f2f2f2"/>
<path d="M1313.2 907.6 V895.6 L1314.1000000000001 893.6 L1315.0 895.6 V907.6 Z" fill="#d4e02a"/>
<path d="M1314.3 907.6 V858.4 L1315.5 856.4 L1316.7 858.4 V907.6 Z" fill="#a4d898"/>
<path d="M1316.3 907.6 V797 L1317.2 794 L1318.1000000000001 797 V907.6 Z" fill="#f2f2f2"/>
<path d="M1332.6 907.6 V896.5 L1333.5 894.5 L1334.3999999999999 896.5 V907.6 Z" fill="#d4e02a"/>
<path d="M1333.6999999999998 907.6 V850.7 L1334.8999999999999 848.7 L1336.1 850.7 V907.6 Z" fill="#a4d898"/>
<path d="M1335.6999999999998 907.6 V770.8 L1336.6 767.8 L1337.5 770.8 V907.6 Z" fill="#f2f2f2"/>
<path d="M1371.2 907.6 V899.8 L1372.1000000000001 897.8 L1373.0 899.8 V907.6 Z" fill="#d4e02a"/>
<path d="M1372.3 907.6 V838 L1373.5 836 L1374.7 838 V907.6 Z" fill="#a4d898"/>
<path d="M1374.3 907.6 V746.6 L1375.2 743.6 L1376.1000000000001 746.6 V907.6 Z" fill="#f2f2f2"/>
<path d="M1390.5 907.6 V892.5 L1391.4 890.5 L1392.3 892.5 V907.6 Z" fill="#d4e02a"/>
<path d="M1391.6 907.6 V843 L1392.8 841 L1394.0 843 V907.6 Z" fill="#a4d898"/>
<path d="M1393.6 907.6 V756 L1394.5 753 L1395.4 756 V907.6 Z" fill="#f2f2f2"/>
<path d="M1468.2 907.6 V898.7 L1469.1000000000001 896.7 L1470.0 898.7 V907.6 Z" fill="#d4e02a"/>
<path d="M1469.3 907.6 V860.2 L1470.5 858.2 L1471.7 860.2 V907.6 Z" fill="#a4d898"/>
<path d="M1471.3 907.6 V780.3 L1472.2 777.3 L1473.1000000000001 780.3 V907.6 Z" fill="#f2f2f2"/>
<path d="M1487.5 907.6 V882 L1488.4 880 L1489.3 882 V907.6 Z" fill="#d4e02a"/>
<path d="M1488.6 907.6 V859.3 L1489.8 857.3 L1491.0 859.3 V907.6 Z" fill="#a4d898"/>
<path d="M1490.6 907.6 V765.2 L1491.5 762.2 L1492.4 765.2 V907.6 Z" fill="#f2f2f2"/>
<path d="M1526.2 907.6 V889 L1527.1000000000001 887 L1528.0 889 V907.6 Z" fill="#d4e02a"/>
<path d="M1527.3 907.6 V883.8 L1528.5 881.8 L1529.7 883.8 V907.6 Z" fill="#a4d898"/>
<path d="M1529.3 907.6 V773 L1530.2 770 L1531.1000000000001 773 V907.6 Z" fill="#f2f2f2"/>
<path d="M1545.5 907.6 V906.5 L1546.4 904.5 L1547.3 906.5 V907.6 Z" fill="#d4e02a"/>
<path d="M1546.6 907.6 V876.2 L1547.8 874.2 L1549.0 876.2 V907.6 Z" fill="#a4d898"/>
<path d="M1548.6 907.6 V772.1 L1549.5 769.1 L1550.4 772.1 V907.6 Z" fill="#f2f2f2"/>
<path d="M1622.5 907.6 V893.8 L1623.4 891.8 L1624.3 893.8 V907.6 Z" fill="#d4e02a"/>
<path d="M1623.6 907.6 V880.2 L1624.8 878.2 L1626.0 880.2 V907.6 Z" fill="#a4d898"/>
<path d="M1625.6 907.6 V777.5 L1626.5 774.5 L1627.4 777.5 V907.6 Z" fill="#f2f2f2"/>
<path d="M1641.9 907.6 V901 L1642.8000000000002 899 L1643.7 901 V907.6 Z" fill="#d4e02a"/>
<path d="M1643.0 907.6 V873 L1644.2 871 L1645.4 873 V907.6 Z" fill="#a4d898"/>
<path d="M1645.0 907.6 V779.9 L1645.9 776.9 L1646.8000000000002 779.9 V907.6 Z" fill="#f2f2f2"/>
<path d="M1680.5 907.6 V898.7 L1681.4 896.7 L1682.3 898.7 V907.6 Z" fill="#d4e02a"/>
<path d="M1681.6 907.6 V862 L1682.8 860 L1684.0 862 V907.6 Z" fill="#a4d898"/>
<path d="M1683.6 907.6 V782.1 L1684.5 779.1 L1685.4 782.1 V907.6 Z" fill="#f2f2f2"/>
<path d="M1699.9 907.6 V905.6 L1700.8000000000002 903.6 L1701.7 905.6 V907.6 Z" fill="#d4e02a"/>
<path d="M1701.0 907.6 V861.1 L1702.2 859.1 L1703.4 861.1 V907.6 Z" fill="#a4d898"/>
<path d="M1703.0 907.6 V805.2 L1703.9 802.2 L1704.8000000000002 805.2 V907.6 Z" fill="#f2f2f2"/>
<path d="M1344.7 907.6 V903.6 H1346.3 V907.6 Z" fill="#9a9a9a"/>
<path d="M1402.9 907.6 V903.6 H1404.5 V907.6 Z" fill="#9a9a9a"/>
<path d="M1538.2 907.6 V903.6 H1539.8 V907.6 Z" fill="#9a9a9a"/>
<path d="M1557.2 907.6 V903.6 H1558.8 V907.6 Z" fill="#9a9a9a"/>
<path d="M1283.2 907.6 V903.6 H1284.8 V907.6 Z" fill="#9a9a9a"/>
<path d="M1659.2 907.6 V903.6 H1660.8 V907.6 Z" fill="#9a9a9a"/>
<path d="M1711.2 907.6 V903.6 H1712.8 V907.6 Z" fill="#9a9a9a"/>
<path d="M1739.2 907.6 V903.6 H1740.8 V907.6 Z" fill="#9a9a9a"/>
<path d="M1249.2 907.6 V903.6 H1250.8 V907.6 Z" fill="#9a9a9a"/>
<path d="M1197.2 907.6 V903.6 H1198.8 V907.6 Z" fill="#9a9a9a"/>
<path d="M1209.2 907.6 V903.6 H1210.8 V907.6 Z" fill="#9a9a9a"/>
<rect x="1035" y="743.2" width="824" height="164.39999999999998" fill="none" stroke="#9a9a9a" stroke-width="2"/>
<line x1="1035" y1="906.1" x2="1859" y2="906.1" stroke="#8a8a8a" stroke-width="1" />
<text x="1022" y="748.8000000000001" font-size="16" fill="#ffffff" text-anchor="end" >1.0</text>
<text x="1022" y="781.7" font-size="16" fill="#ffffff" text-anchor="end" >0.8</text>
<text x="1022" y="814.6" font-size="16" fill="#ffffff" text-anchor="end" >0.6</text>
<text x="1022" y="847.5000000000001" font-size="16" fill="#ffffff" text-anchor="end" >0.4</text>
<text x="1022" y="880.4000000000001" font-size="16" fill="#ffffff" text-anchor="end" >0.2</text>
<text x="1022" y="913.3000000000001" font-size="16" fill="#ffffff" text-anchor="end" >0.0</text>
<text x="1085.05" y="928" font-size="16" fill="#ffffff" text-anchor="middle" >-900</text>
<text x="1165.75" y="928" font-size="16" fill="#ffffff" text-anchor="middle" >-700</text>
<text x="1246.45" y="928" font-size="16" fill="#ffffff" text-anchor="middle" >-500</text>
<text x="1327.15" y="928" font-size="16" fill="#ffffff" text-anchor="middle" >-300</text>
<text x="1407.8500000000001" y="928" font-size="16" fill="#ffffff" text-anchor="middle" >-100</text>
<text x="1488.55" y="928" font-size="16" fill="#ffffff" text-anchor="middle" >100</text>
<text x="1569.25" y="928" font-size="16" fill="#ffffff" text-anchor="middle" >300</text>
<text x="1649.95" y="928" font-size="16" fill="#ffffff" text-anchor="middle" >500</text>
<text x="1730.65" y="928" font-size="16" fill="#ffffff" text-anchor="middle" >700</text>
<text x="1811.3500000000001" y="928" font-size="16" fill="#ffffff" text-anchor="middle" >900</text>
<text x="1447.3" y="951.5" font-size="16.7" fill="#ffffff" text-anchor="middle" textLength="101.5" lengthAdjust="spacingAndGlyphs" >TII Subcarrier</text>
<text transform="translate(977.5,863.5) rotate(-90)" font-size="15" font-weight="bold" fill="#fff" textLength="75.3" lengthAdjust="spacingAndGlyphs">Magnitude</text>
</svg>
</body></html>
